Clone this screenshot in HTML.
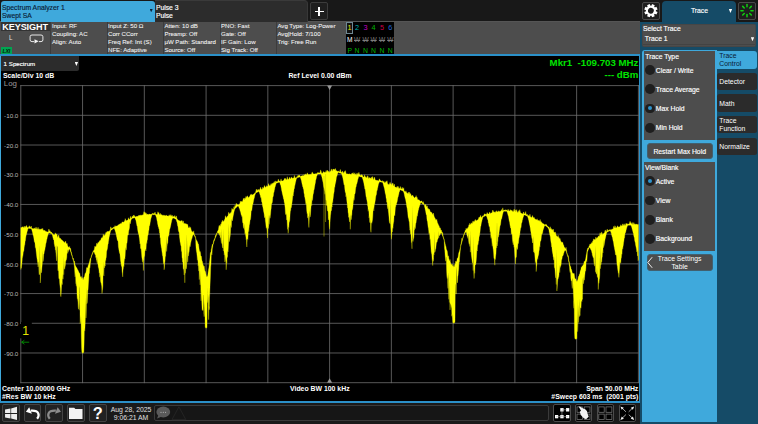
<!DOCTYPE html>
<html><head><meta charset="utf-8"><title>Spectrum Analyzer</title>
<style>
html,body{margin:0;padding:0;background:#181818;}
body{width:758px;height:424px;position:relative;overflow:hidden;font-family:"Liberation Sans",Arial,sans-serif;color:#fff;}
.a{position:absolute;white-space:nowrap;}
.tri{position:absolute;width:3.4px;height:4px;background:#fff;clip-path:polygon(0 0,100% 0,50% 100%);}
.t{position:absolute;white-space:nowrap;line-height:8.05px;font-size:6.8px;-webkit-text-stroke:0.15px currentColor;}
.i{position:absolute;white-space:nowrap;font-size:6.1px;line-height:8.05px;color:#f4f4f4;-webkit-text-stroke:0.07px #f4f4f4;}
.b{position:absolute;white-space:nowrap;font-weight:bold;font-size:6.9px;line-height:8.4px;color:#fff;}
.yl{position:absolute;left:4.1px;font-size:6.25px;line-height:7px;color:#bcbcbc;white-space:nowrap;}
.sep{position:absolute;top:22px;height:32px;width:1px;background:#3c3c3c;}
.btn{position:absolute;background:#222;border:1px solid #444;border-radius:2px;box-sizing:border-box;}
.sb{position:absolute;left:717.3px;width:40px;height:17.2px;background:#2b2b2b;border-radius:2.5px;font-size:6.8px;line-height:7.8px;color:#fff;box-sizing:border-box;padding-left:2px;white-space:nowrap;}
.rad{position:absolute;left:645.4px;width:9.8px;height:9.8px;border-radius:50%;background:#1e1e1e;}
.rad.on::after{content:"";position:absolute;left:2.9px;top:2.9px;width:4px;height:4px;border-radius:50%;background:#2f93cc;}
.rl{position:absolute;left:655.8px;font-size:6.8px;line-height:8px;color:#fff;white-space:nowrap;-webkit-text-stroke:0.15px #fff;}
</style></head><body>

<div class="a" style="left:0;top:20.8px;width:639.8px;height:34px;background:#4d4d4d;"></div><div class="a" style="left:0;top:21.2px;width:639.8px;height:1.2px;background:#555;"></div>
<!-- ===== top tabs ===== -->
<div class="a" style="left:1px;top:1px;width:153.5px;height:21px;background:#3fa9dc;border-radius:3px 3px 0 0;"></div>
<div class="t" style="left:2px;top:4.1px;color:#0a2036;">Spectrum Analyzer 1<br>Swept SA</div>
<div class="tri" style="left:149.7px;top:9px;width:3px;height:3.3px;background:#0a2036;"></div>
<div class="a" style="left:155px;top:0;width:153.4px;height:22px;background:#2c2c2c;border-radius:0 4px 0 0;border-top:0.8px solid #3a3a3a;border-right:0.8px solid #383838;box-sizing:border-box;"></div>
<div class="t" style="left:155.9px;top:4.1px;color:#fff;">Pulse 3<br>Pulse</div>
<div class="btn" style="left:310px;top:2.2px;width:17.9px;height:17.7px;background:#1e1e1e;border-color:#3c3c3c;"></div>
<div class="a" style="left:314.5px;top:10.5px;width:9.6px;height:1.8px;background:#fff;"></div>
<div class="a" style="left:318.4px;top:6.8px;width:1.8px;height:9.2px;background:#fff;"></div>

<!-- ===== header info bar ===== -->

<div class="a" style="left:1px;top:22px;width:48.5px;height:9.1px;background:#333;"></div>
<div class="a" style="left:2.3px;top:22px;font-weight:bold;font-size:9.1px;line-height:10px;letter-spacing:-0.12px;color:#fff;">KEYSIGHT</div>
<div class="a" style="left:8.5px;top:34.1px;font-size:7.2px;line-height:8px;color:#e4e4e4;transform:scaleX(0.85);transform-origin:0 0;">L</div>
<svg class="a" style="left:29px;top:33px;" width="16" height="12" viewBox="0 0 16 12"><path d="M5.2 8.6H3Q1.1 8.6 1.1 6.9V3.7Q1.1 2 3 2H12Q13.9 2 13.9 3.7V6.9Q13.9 8.6 12 8.6H10" fill="none" stroke="#f0f0f0" stroke-width="0.95"/><path d="M5.5 6.3L9.6 8.35L5.5 10.4Z" fill="#f4f4f4"/></svg>
<div class="a" style="left:1.1px;top:47.4px;width:11.2px;height:7px;background:#00a651;"></div>
<div class="a" style="left:2.6px;top:47.8px;font-size:5.3px;line-height:6.8px;font-weight:bold;font-style:italic;letter-spacing:-0.3px;color:#06200e;">LXI</div>
<div class="sep" style="left:50px;"></div><div class="sep" style="left:106.6px;"></div><div class="sep" style="left:163px;"></div><div class="sep" style="left:219.6px;"></div><div class="sep" style="left:276.2px;"></div>
<div class="i" style="left:52px;top:21.9px;">Input: RF<br>Coupling: AC<br>Align: Auto</div>
<div class="i" style="left:108px;top:21.9px;">Input Z: 50 &#937;<br>Corr CCorr<br>Freq Ref: Int (S)<br>NFE: Adaptive</div>
<div class="i" style="left:164.4px;top:21.9px;">Atten: 10 dB<br>Preamp: Off<br>&#181;W Path: Standard<br>Source: Off</div>
<div class="i" style="left:221px;top:21.9px;">PNO: Fast<br>Gate: Off<br>IF Gain: Low<br>Sig Track: Off</div>
<div class="i" style="left:277.4px;top:21.9px;">Avg Type: Log-Power<br>Avg|Hold: 7/100<br>Trig: Free Run</div>
<!-- trace indicator -->
<div class="a" style="left:345.8px;top:22px;width:48.4px;height:32.2px;background:#000;"></div>
<div class="a" style="left:345.8px;top:22.2px;width:7px;height:11.4px;box-sizing:border-box;border:0.8px solid #6f8792;background:#111;"></div>
<div class="a" id="tn" style="left:345.8px;top:24px;font-size:7.3px;line-height:8px;width:49px;">
<span style="color:#e6e600;left:1.8px">1</span><span style="color:#00b4b4;left:9.3px">2</span><span style="color:#c800c8;left:17.7px">3</span><span style="color:#00b400;left:25.8px">4</span><span style="color:#c80046;left:34.2px">5</span><span style="color:#2264d8;left:42.5px">6</span></div>
<div class="a" id="tm" style="left:345.8px;top:35.6px;font-size:6.6px;line-height:8px;width:49px;">
<span style="color:#fff;left:1.2px">M</span><span style="color:#7c7c7c;left:8.2px;text-decoration:line-through">W</span><span style="color:#7c7c7c;left:16.6px;text-decoration:line-through">W</span><span style="color:#7c7c7c;left:24.7px;text-decoration:line-through">W</span><span style="color:#7c7c7c;left:33.1px;text-decoration:line-through">W</span><span style="color:#7c7c7c;left:41.4px;text-decoration:line-through">W</span></div>
<div class="a" id="tp" style="left:345.8px;top:46.8px;font-size:6.8px;line-height:8px;width:49px;color:#00b400;">
<span style="left:1.7px">P</span><span style="left:8.8px">N</span><span style="left:17.2px">N</span><span style="left:25.3px">N</span><span style="left:33.7px">N</span><span style="left:42px">N</span></div>
<style>#tn span,#tm span,#tp span{position:absolute;top:0;}</style>

<!-- ===== plot window ===== -->
<div class="a" style="left:0;top:398px;width:639.8px;height:26px;background:#1a1a1a;"></div>
<div class="a" style="left:0;top:54.3px;width:639.8px;height:348.3px;background:#2b90c8;"></div><div class="a" style="left:0;top:56px;width:1.4px;height:345.2px;background:#3fa9dc;"></div><div class="a" style="left:1.4px;top:56px;width:637.4px;height:345.2px;background:#000;"></div>
<div class="a" style="left:1.3px;top:55.8px;width:77.5px;height:15.4px;background:#2c2c2c;border-radius:0 0 2px 0;"></div>
<div class="a" style="left:3.6px;top:60px;font-size:6.2px;line-height:8px;color:#fff;-webkit-text-stroke:0.15px #fff;">1 Spectrum</div>
<div class="tri" style="left:74.7px;top:61.9px;"></div>
<div class="b" style="left:2.9px;top:72.4px;">Scale/Div 10 dB</div>
<div class="a" style="left:3.8px;top:79.2px;font-size:7.9px;line-height:9px;color:#9a9a9a;">Log</div>
<div class="b" style="left:288.4px;top:72.4px;">Ref Level 0.00 dBm</div>
<div class="a" style="right:119.6px;top:57.4px;font-weight:bold;font-size:9.7px;line-height:11px;color:#00e400;white-space:pre;text-align:right;">Mkr1  -109.703 MHz</div>
<div class="a" style="right:119.6px;top:69.4px;font-weight:bold;font-size:9.7px;line-height:11px;color:#00e400;text-align:right;">--- dBm</div>
<div class="b" style="left:2px;top:385px;">Center 10.00000 GHz<br>#Res BW 10 kHz</div>
<div class="b" style="left:290px;top:384.8px;">Video BW 100 kHz</div>
<div class="b" style="right:119.7px;top:384.9px;text-align:right;">Span 50.00 MHz<br>#Sweep 603 ms&nbsp; (2001 pts)</div>
<div class="yl" style="top:112.0px;">-10.0</div><div class="yl" style="top:141.7px;">-20.0</div><div class="yl" style="top:171.4px;">-30.0</div><div class="yl" style="top:201.1px;">-40.0</div><div class="yl" style="top:230.8px;">-50.0</div><div class="yl" style="top:260.5px;">-60.0</div><div class="yl" style="top:290.2px;">-70.0</div><div class="yl" style="top:319.9px;">-80.0</div><div class="yl" style="top:349.6px;">-90.0</div>

<svg class="a" style="left:0;top:0;" width="640" height="402" viewBox="0 0 640 402">
<g stroke="#6e6e6e" stroke-width="0.8" fill="none">
<path d="M20.80 85.14999999999999V383.15"/>
<path d="M20.35 85.60H638.85"/>
<path d="M82.56 85.14999999999999V383.15"/>
<path d="M20.35 115.31H638.85"/>
<path d="M144.32 85.14999999999999V383.15"/>
<path d="M20.35 145.02H638.85"/>
<path d="M206.08 85.14999999999999V383.15"/>
<path d="M20.35 174.73H638.85"/>
<path d="M267.84 85.14999999999999V383.15"/>
<path d="M20.35 204.44H638.85"/>
<path d="M329.60 85.14999999999999V383.15"/>
<path d="M20.35 234.15H638.85"/>
<path d="M391.36 85.14999999999999V383.15"/>
<path d="M20.35 263.86H638.85"/>
<path d="M453.12 85.14999999999999V383.15"/>
<path d="M20.35 293.57H638.85"/>
<path d="M514.88 85.14999999999999V383.15"/>
<path d="M20.35 323.28H638.85"/>
<path d="M576.64 85.14999999999999V383.15"/>
<path d="M20.35 352.99H638.85"/>
<path d="M638.40 85.14999999999999V383.15"/>
<path d="M20.35 382.70H638.85"/>
</g>
<path d="M327.1 85.6H332.1L329.6 90Z" fill="#969696"/><path d="M327.1 382.7H332.1L329.6 378.3Z" fill="#969696"/>
<path fill="#ffff00" stroke="#ffff00" stroke-width="0.3" stroke-linejoin="round" d="M20.8 227.6 L21.1 227.5 L21.4 227.6 L21.7 227.4 L22.0 227.1 L22.3 226.7 L22.7 227.0 L23.0 227.3 L23.3 227.6 L23.6 227.6 L23.9 226.8 L24.2 226.0 L24.5 227.0 L24.8 227.6 L25.1 227.6 L25.4 226.9 L25.7 226.2 L26.0 226.7 L26.4 225.6 L26.7 225.6 L27.0 226.9 L27.3 227.0 L27.6 227.5 L27.9 228.0 L28.2 227.4 L28.5 227.4 L28.8 226.6 L29.1 226.4 L29.4 225.7 L29.8 226.4 L30.1 227.1 L30.4 227.5 L30.7 227.3 L31.0 226.4 L31.3 226.0 L31.6 227.8 L31.9 228.6 L32.2 228.3 L32.5 228.5 L32.8 228.7 L33.2 228.7 L33.5 228.8 L33.8 228.4 L34.1 227.9 L34.4 228.2 L34.7 228.4 L35.0 228.7 L35.3 229.0 L35.6 228.3 L35.9 227.3 L36.2 227.3 L36.5 228.4 L36.9 229.3 L37.2 229.2 L37.5 229.3 L37.8 227.9 L38.1 227.3 L38.4 228.8 L38.7 229.2 L39.0 229.5 L39.3 229.7 L39.6 229.2 L39.9 228.7 L40.3 229.5 L40.6 229.7 L40.9 229.1 L41.2 229.5 L41.5 229.1 L41.8 228.6 L42.1 229.7 L42.4 229.3 L42.7 228.3 L43.0 229.3 L43.3 230.5 L43.7 230.5 L44.0 230.3 L44.3 230.0 L44.6 230.5 L44.9 231.0 L45.2 230.8 L45.5 231.3 L45.8 231.5 L46.1 231.5 L46.4 231.7 L46.7 231.8 L47.0 231.6 L47.4 232.1 L47.7 232.0 L48.0 231.9 L48.3 231.9 L48.6 230.6 L48.9 229.0 L49.2 230.0 L49.5 231.3 L49.8 230.9 L50.1 230.7 L50.4 231.6 L50.8 232.4 L51.1 232.1 L51.4 232.1 L51.7 232.8 L52.0 232.8 L52.3 233.8 L52.6 233.4 L52.9 234.1 L53.2 234.3 L53.5 234.6 L53.8 234.7 L54.2 234.9 L54.5 234.5 L54.8 234.2 L55.1 234.0 L55.4 232.8 L55.7 233.7 L56.0 233.9 L56.3 233.9 L56.6 235.0 L56.9 234.1 L57.2 235.7 L57.5 237.1 L57.9 237.4 L58.2 236.6 L58.5 235.2 L58.8 234.9 L59.1 236.7 L59.4 238.3 L59.7 237.9 L60.0 238.5 L60.3 238.1 L60.6 238.7 L60.9 239.3 L61.3 239.6 L61.6 240.0 L61.9 239.8 L62.2 240.2 L62.5 240.4 L62.8 241.1 L63.1 241.3 L63.4 241.6 L63.7 241.6 L64.0 241.9 L64.3 242.4 L64.6 242.8 L65.0 242.2 L65.3 241.4 L65.6 241.0 L65.9 242.5 L66.2 244.0 L66.5 244.1 L66.8 243.2 L67.1 243.3 L67.4 244.8 L67.7 246.0 L68.0 246.6 L68.4 246.9 L68.7 247.3 L69.0 247.4 L69.3 247.1 L69.6 246.4 L69.9 247.9 L70.2 248.8 L70.5 248.1 L70.8 249.5 L71.1 251.5 L71.4 252.3 L71.8 254.1 L72.1 254.9 L72.4 256.4 L72.7 257.7 L73.0 258.3 L73.3 258.0 L73.6 259.4 L73.9 261.6 L74.2 261.0 L74.5 261.1 L74.8 263.3 L75.1 264.8 L75.5 265.7 L75.8 266.3 L76.1 266.9 L76.4 267.3 L76.7 267.8 L77.0 268.3 L77.3 268.9 L77.6 269.5 L77.9 270.2 L78.2 270.4 L78.5 271.3 L78.9 272.2 L79.2 273.0 L79.5 272.9 L79.8 273.6 L80.1 275.6 L80.4 276.7 L80.7 277.2 L81.0 276.7 L81.3 276.4 L81.6 278.1 L81.9 278.7 L82.3 277.6 L82.6 278.2 L82.9 279.7 L83.2 279.8 L83.5 278.8 L83.8 277.5 L84.1 277.1 L84.4 277.1 L84.7 275.5 L85.0 273.7 L85.3 273.3 L85.6 273.0 L86.0 272.1 L86.3 270.2 L86.6 267.7 L86.9 267.6 L87.2 268.2 L87.5 267.7 L87.8 266.9 L88.1 265.8 L88.4 264.7 L88.7 264.3 L89.0 263.2 L89.4 262.1 L89.7 260.8 L90.0 259.1 L90.3 258.4 L90.6 258.2 L90.9 258.0 L91.2 256.2 L91.5 255.4 L91.8 254.8 L92.1 253.7 L92.4 253.1 L92.8 252.3 L93.1 250.9 L93.4 250.5 L93.7 250.7 L94.0 250.4 L94.3 249.3 L94.6 247.6 L94.9 246.0 L95.2 246.3 L95.5 246.9 L95.8 247.0 L96.1 246.4 L96.5 244.2 L96.8 243.1 L97.1 244.2 L97.4 244.3 L97.7 243.4 L98.0 242.4 L98.3 242.9 L98.6 242.2 L98.9 242.2 L99.2 241.4 L99.5 241.1 L99.9 240.6 L100.2 240.5 L100.5 240.2 L100.8 239.8 L101.1 238.9 L101.4 237.8 L101.7 237.8 L102.0 238.2 L102.3 237.6 L102.6 237.4 L102.9 236.3 L103.2 234.2 L103.6 234.8 L103.9 236.2 L104.2 235.9 L104.5 235.1 L104.8 234.7 L105.1 234.5 L105.4 234.2 L105.7 233.2 L106.0 232.2 L106.3 232.6 L106.6 233.0 L107.0 231.6 L107.3 231.2 L107.6 232.1 L107.9 231.6 L108.2 231.3 L108.5 231.6 L108.8 231.6 L109.1 231.5 L109.4 230.7 L109.7 230.8 L110.0 230.7 L110.4 229.1 L110.7 226.8 L111.0 227.3 L111.3 228.8 L111.6 228.6 L111.9 228.6 L112.2 228.4 L112.5 228.1 L112.8 227.9 L113.1 227.8 L113.4 227.1 L113.7 227.2 L114.1 227.2 L114.4 227.3 L114.7 226.5 L115.0 225.6 L115.3 225.9 L115.6 226.4 L115.9 226.6 L116.2 226.1 L116.5 226.3 L116.8 225.8 L117.1 225.8 L117.5 225.7 L117.8 225.5 L118.1 225.3 L118.4 224.6 L118.7 224.9 L119.0 224.5 L119.3 224.3 L119.6 224.2 L119.9 224.1 L120.2 223.6 L120.5 223.8 L120.9 223.6 L121.2 223.5 L121.5 223.4 L121.8 222.7 L122.1 222.0 L122.4 221.8 L122.7 222.1 L123.0 222.5 L123.3 222.1 L123.6 222.2 L123.9 221.7 L124.2 221.6 L124.6 221.2 L124.9 219.9 L125.2 218.6 L125.5 219.6 L125.8 220.5 L126.1 220.9 L126.4 220.2 L126.7 220.7 L127.0 220.4 L127.3 220.0 L127.6 220.3 L128.0 219.6 L128.3 218.6 L128.6 217.7 L128.9 218.7 L129.2 219.4 L129.5 219.3 L129.8 219.2 L130.1 218.7 L130.4 216.7 L130.7 216.3 L131.0 218.1 L131.4 218.2 L131.7 217.7 L132.0 217.2 L132.3 216.1 L132.6 216.2 L132.9 217.1 L133.2 216.5 L133.5 215.2 L133.8 214.9 L134.1 216.1 L134.4 215.6 L134.7 215.9 L135.1 217.2 L135.4 216.6 L135.7 217.0 L136.0 216.8 L136.3 216.7 L136.6 216.0 L136.9 216.6 L137.2 216.3 L137.5 216.1 L137.8 216.4 L138.1 216.3 L138.5 215.7 L138.8 215.1 L139.1 215.4 L139.4 215.6 L139.7 215.5 L140.0 214.8 L140.3 215.0 L140.6 215.5 L140.9 215.5 L141.2 215.4 L141.5 215.3 L141.8 214.9 L142.2 214.8 L142.5 215.0 L142.8 215.2 L143.1 215.1 L143.4 214.5 L143.7 213.1 L144.0 211.6 L144.3 212.6 L144.6 213.4 L144.9 212.0 L145.2 213.3 L145.6 213.7 L145.9 212.8 L146.2 213.2 L146.5 214.1 L146.8 214.7 L147.1 214.1 L147.4 214.3 L147.7 214.5 L148.0 214.3 L148.3 214.6 L148.6 214.6 L149.0 214.3 L149.3 213.8 L149.6 214.6 L149.9 214.1 L150.2 214.4 L150.5 214.5 L150.8 214.0 L151.1 214.4 L151.4 214.2 L151.7 214.1 L152.0 213.7 L152.3 213.6 L152.7 213.3 L153.0 213.5 L153.3 213.5 L153.6 213.7 L153.9 213.5 L154.2 213.4 L154.5 213.6 L154.8 212.5 L155.1 212.1 L155.4 213.4 L155.7 214.3 L156.1 214.1 L156.4 214.6 L156.7 214.4 L157.0 214.4 L157.3 214.4 L157.6 213.3 L157.9 211.7 L158.2 212.4 L158.5 213.5 L158.8 212.5 L159.1 213.6 L159.5 214.6 L159.8 215.0 L160.1 214.1 L160.4 213.3 L160.7 214.4 L161.0 215.3 L161.3 215.0 L161.6 214.4 L161.9 214.7 L162.2 215.4 L162.5 214.9 L162.8 215.4 L163.2 215.3 L163.5 215.0 L163.8 215.7 L164.1 215.4 L164.4 215.3 L164.7 215.5 L165.0 215.6 L165.3 215.5 L165.6 215.8 L165.9 215.7 L166.2 215.3 L166.6 215.2 L166.9 215.7 L167.2 216.1 L167.5 215.9 L167.8 215.9 L168.1 215.7 L168.4 215.8 L168.7 216.4 L169.0 215.5 L169.3 214.7 L169.6 215.4 L170.0 216.3 L170.3 216.0 L170.6 214.9 L170.9 214.6 L171.2 215.8 L171.5 216.6 L171.8 215.8 L172.1 215.1 L172.4 216.1 L172.7 216.6 L173.0 216.8 L173.3 216.6 L173.7 216.2 L174.0 217.2 L174.3 216.7 L174.6 215.8 L174.9 215.5 L175.2 216.8 L175.5 217.5 L175.8 217.4 L176.1 216.2 L176.4 216.0 L176.7 217.7 L177.1 219.3 L177.4 219.1 L177.7 219.8 L178.0 220.1 L178.3 220.2 L178.6 220.4 L178.9 220.2 L179.2 220.8 L179.5 220.9 L179.8 220.7 L180.1 220.7 L180.4 221.4 L180.8 221.1 L181.1 220.7 L181.4 220.3 L181.7 221.2 L182.0 220.8 L182.3 220.9 L182.6 222.5 L182.9 222.4 L183.2 220.8 L183.5 221.8 L183.8 223.5 L184.2 223.7 L184.5 223.6 L184.8 223.2 L185.1 223.6 L185.4 223.9 L185.7 223.5 L186.0 224.3 L186.3 224.6 L186.6 223.8 L186.9 224.0 L187.2 225.0 L187.6 224.2 L187.9 225.6 L188.2 227.0 L188.5 227.7 L188.8 228.0 L189.1 228.1 L189.4 227.9 L189.7 226.5 L190.0 228.0 L190.3 228.2 L190.6 227.2 L190.9 228.6 L191.3 230.3 L191.6 231.1 L191.9 231.5 L192.2 231.5 L192.5 231.8 L192.8 232.2 L193.1 233.1 L193.4 232.1 L193.7 230.8 L194.0 232.6 L194.3 234.6 L194.7 235.3 L195.0 236.0 L195.3 236.2 L195.6 237.4 L195.9 238.8 L196.2 239.7 L196.5 240.1 L196.8 240.7 L197.1 241.8 L197.4 241.5 L197.7 242.5 L198.1 244.3 L198.4 243.8 L198.7 245.6 L199.0 248.2 L199.3 249.9 L199.6 251.3 L199.9 251.8 L200.2 251.5 L200.5 252.7 L200.8 255.7 L201.1 256.0 L201.4 256.3 L201.8 259.8 L202.1 260.9 L202.4 261.4 L202.7 263.3 L203.0 264.4 L203.3 265.1 L203.6 266.6 L203.9 266.2 L204.2 265.9 L204.5 268.4 L204.8 270.6 L205.2 271.4 L205.5 271.6 L205.8 273.3 L206.1 275.0 L206.4 276.2 L206.7 277.0 L207.0 277.1 L207.3 276.3 L207.6 275.9 L207.9 274.3 L208.2 271.8 L208.6 269.2 L208.9 267.8 L209.2 265.3 L209.5 262.1 L209.8 259.7 L210.1 256.3 L210.4 252.7 L210.7 252.6 L211.0 251.9 L211.3 249.2 L211.6 248.3 L211.9 245.9 L212.3 244.3 L212.6 244.7 L212.9 244.1 L213.2 243.0 L213.5 241.6 L213.8 240.1 L214.1 239.7 L214.4 239.0 L214.7 238.8 L215.0 237.4 L215.3 236.0 L215.7 235.1 L216.0 234.8 L216.3 234.1 L216.6 233.5 L216.9 232.9 L217.2 232.1 L217.5 231.3 L217.8 231.1 L218.1 230.2 L218.4 229.7 L218.7 227.7 L219.0 225.7 L219.4 225.3 L219.7 226.1 L220.0 226.7 L220.3 225.7 L220.6 224.4 L220.9 223.9 L221.2 224.2 L221.5 222.6 L221.8 221.8 L222.1 221.7 L222.4 220.2 L222.8 221.2 L223.1 221.8 L223.4 221.5 L223.7 220.9 L224.0 220.7 L224.3 220.2 L224.6 219.6 L224.9 218.9 L225.2 217.3 L225.5 215.7 L225.8 216.5 L226.2 217.4 L226.5 217.7 L226.8 217.2 L227.1 216.4 L227.4 216.6 L227.7 215.9 L228.0 215.9 L228.3 214.3 L228.6 212.6 L228.9 212.3 L229.2 213.4 L229.5 213.9 L229.9 213.6 L230.2 213.4 L230.5 213.1 L230.8 212.6 L231.1 212.4 L231.4 212.0 L231.7 210.3 L232.0 208.2 L232.3 209.9 L232.6 209.4 L232.9 209.0 L233.3 209.8 L233.6 209.1 L233.9 206.7 L234.2 207.5 L234.5 208.5 L234.8 206.0 L235.1 205.2 L235.4 206.4 L235.7 206.0 L236.0 204.3 L236.3 203.2 L236.7 204.3 L237.0 205.3 L237.3 204.3 L237.6 204.7 L237.9 204.9 L238.2 204.8 L238.5 205.2 L238.8 204.4 L239.1 204.2 L239.4 204.3 L239.7 204.0 L240.0 202.4 L240.4 201.0 L240.7 202.6 L241.0 202.2 L241.3 201.1 L241.6 201.4 L241.9 201.9 L242.2 202.1 L242.5 201.2 L242.8 200.6 L243.1 199.8 L243.4 198.3 L243.8 198.6 L244.1 199.6 L244.4 199.9 L244.7 198.0 L245.0 198.1 L245.3 199.3 L245.6 197.9 L245.9 196.4 L246.2 196.6 L246.5 197.7 L246.8 197.3 L247.2 196.0 L247.5 195.8 L247.8 196.8 L248.1 197.7 L248.4 197.6 L248.7 197.3 L249.0 197.2 L249.3 196.8 L249.6 196.6 L249.9 196.0 L250.2 195.0 L250.5 194.4 L250.9 195.2 L251.2 195.3 L251.5 194.2 L251.8 194.3 L252.1 194.7 L252.4 195.0 L252.7 194.8 L253.0 194.5 L253.3 194.4 L253.6 194.1 L253.9 194.0 L254.3 193.5 L254.6 193.5 L254.9 192.7 L255.2 193.3 L255.5 192.4 L255.8 191.3 L256.1 190.0 L256.4 189.1 L256.7 190.0 L257.0 191.0 L257.3 190.6 L257.6 189.8 L258.0 189.7 L258.3 190.2 L258.6 190.1 L258.9 189.0 L259.2 189.4 L259.5 190.2 L259.8 190.4 L260.1 189.1 L260.4 187.6 L260.7 187.2 L261.0 188.4 L261.4 189.3 L261.7 189.4 L262.0 189.4 L262.3 189.1 L262.6 188.0 L262.9 187.1 L263.2 188.1 L263.5 188.6 L263.8 188.1 L264.1 186.8 L264.4 185.5 L264.8 185.9 L265.1 187.0 L265.4 187.8 L265.7 187.1 L266.0 187.3 L266.3 186.4 L266.6 185.6 L266.9 186.4 L267.2 186.7 L267.5 186.1 L267.8 186.4 L268.1 185.5 L268.5 183.7 L268.8 183.7 L269.1 185.3 L269.4 185.9 L269.7 185.4 L270.0 185.5 L270.3 185.4 L270.6 184.9 L270.9 183.8 L271.2 183.5 L271.5 184.3 L271.9 184.8 L272.2 184.0 L272.5 183.1 L272.8 183.6 L273.1 183.5 L273.4 182.6 L273.7 183.1 L274.0 183.2 L274.3 181.4 L274.6 181.7 L274.9 183.3 L275.3 182.5 L275.6 180.8 L275.9 181.8 L276.2 182.1 L276.5 181.3 L276.8 181.7 L277.1 181.8 L277.4 181.5 L277.7 181.5 L278.0 180.3 L278.3 179.1 L278.6 179.9 L279.0 181.0 L279.3 180.9 L279.6 181.3 L279.9 181.1 L280.2 181.2 L280.5 181.5 L280.8 179.7 L281.1 178.9 L281.4 180.5 L281.7 181.1 L282.0 180.9 L282.4 180.9 L282.7 181.0 L283.0 180.6 L283.3 180.6 L283.6 180.6 L283.9 180.1 L284.2 179.0 L284.5 178.3 L284.8 179.2 L285.1 178.8 L285.4 178.3 L285.8 179.2 L286.1 180.0 L286.4 180.0 L286.7 179.1 L287.0 178.5 L287.3 176.7 L287.6 178.3 L287.9 179.6 L288.2 179.2 L288.5 179.4 L288.8 178.9 L289.1 178.5 L289.5 177.4 L289.8 177.2 L290.1 178.2 L290.4 179.0 L290.7 178.8 L291.0 178.3 L291.3 177.4 L291.6 176.9 L291.9 177.6 L292.2 178.3 L292.5 178.5 L292.9 177.9 L293.2 178.1 L293.5 178.3 L293.8 177.8 L294.1 176.2 L294.4 175.4 L294.7 176.9 L295.0 177.9 L295.3 177.9 L295.6 177.8 L295.9 177.4 L296.2 177.7 L296.6 177.4 L296.9 176.6 L297.2 176.7 L297.5 176.4 L297.8 175.7 L298.1 175.1 L298.4 175.6 L298.7 176.0 L299.0 175.5 L299.3 174.9 L299.6 175.3 L300.0 175.8 L300.3 176.4 L300.6 176.7 L300.9 176.1 L301.2 176.1 L301.5 176.1 L301.8 175.9 L302.1 175.4 L302.4 175.4 L302.7 175.7 L303.0 176.0 L303.4 175.8 L303.7 175.5 L304.0 174.4 L304.3 174.8 L304.6 175.0 L304.9 175.3 L305.2 175.0 L305.5 174.1 L305.8 173.8 L306.1 174.6 L306.4 175.1 L306.7 174.8 L307.1 173.4 L307.4 172.8 L307.7 174.0 L308.0 174.5 L308.3 174.7 L308.6 174.5 L308.9 174.4 L309.2 174.7 L309.5 174.3 L309.8 174.6 L310.1 174.3 L310.5 174.2 L310.8 174.4 L311.1 174.4 L311.4 174.3 L311.7 173.5 L312.0 172.3 L312.3 172.1 L312.6 173.2 L312.9 173.3 L313.2 173.5 L313.5 173.9 L313.9 174.1 L314.2 174.1 L314.5 173.8 L314.8 174.1 L315.1 173.9 L315.4 173.7 L315.7 173.9 L316.0 173.3 L316.3 173.8 L316.6 173.7 L316.9 173.9 L317.2 173.3 L317.6 172.6 L317.9 172.4 L318.2 172.7 L318.5 172.8 L318.8 172.7 L319.1 172.7 L319.4 172.9 L319.7 172.8 L320.0 172.7 L320.3 171.6 L320.6 170.1 L321.0 170.4 L321.3 172.1 L321.6 173.2 L321.9 173.2 L322.2 173.4 L322.5 173.1 L322.8 173.2 L323.1 172.1 L323.4 171.4 L323.7 172.4 L324.0 172.1 L324.4 172.0 L324.7 172.7 L325.0 172.8 L325.3 172.2 L325.6 172.3 L325.9 171.2 L326.2 170.4 L326.5 171.5 L326.8 172.5 L327.1 171.4 L327.4 170.1 L327.7 171.1 L328.1 171.2 L328.4 170.9 L328.7 171.7 L329.0 172.4 L329.3 172.2 L329.6 172.3 L329.9 171.3 L330.2 171.2 L330.5 171.4 L330.8 171.0 L331.1 169.4 L331.5 169.0 L331.8 170.3 L332.1 171.3 L332.4 171.1 L332.7 170.0 L333.0 168.9 L333.3 169.1 L333.6 170.0 L333.9 169.1 L334.2 169.1 L334.5 170.0 L334.8 170.1 L335.2 168.6 L335.5 168.7 L335.8 170.4 L336.1 170.5 L336.4 170.6 L336.7 170.9 L337.0 170.7 L337.3 171.3 L337.6 171.2 L337.9 171.6 L338.2 171.2 L338.6 171.0 L338.9 171.5 L339.2 171.7 L339.5 171.9 L339.8 171.2 L340.1 169.8 L340.4 169.6 L340.7 171.2 L341.0 171.9 L341.3 172.1 L341.6 172.8 L342.0 172.1 L342.3 171.1 L342.6 171.3 L342.9 172.4 L343.2 172.2 L343.5 172.8 L343.8 173.4 L344.1 172.4 L344.4 171.5 L344.7 171.6 L345.0 171.6 L345.3 170.5 L345.7 171.8 L346.0 173.2 L346.3 173.7 L346.6 173.9 L346.9 173.7 L347.2 173.8 L347.5 173.9 L347.8 173.9 L348.1 173.9 L348.4 174.2 L348.7 173.9 L349.1 173.8 L349.4 174.2 L349.7 173.7 L350.0 174.3 L350.3 174.4 L350.6 174.5 L350.9 174.1 L351.2 174.4 L351.5 174.2 L351.8 173.4 L352.1 173.0 L352.5 174.0 L352.8 173.2 L353.1 172.5 L353.4 173.8 L353.7 174.3 L354.0 173.8 L354.3 174.9 L354.6 173.4 L354.9 172.7 L355.2 174.5 L355.5 173.9 L355.8 174.7 L356.2 175.3 L356.5 174.6 L356.8 173.4 L357.1 172.9 L357.4 174.2 L357.7 175.0 L358.0 173.5 L358.3 173.5 L358.6 174.7 L358.9 172.2 L359.2 173.5 L359.6 174.9 L359.9 174.8 L360.2 175.2 L360.5 175.7 L360.8 175.0 L361.1 175.2 L361.4 174.6 L361.7 174.7 L362.0 175.5 L362.3 175.1 L362.6 175.6 L363.0 176.8 L363.3 177.1 L363.6 177.1 L363.9 176.9 L364.2 175.9 L364.5 174.8 L364.8 176.1 L365.1 177.3 L365.4 177.2 L365.7 176.7 L366.0 176.6 L366.3 177.2 L366.7 177.9 L367.0 177.7 L367.3 176.7 L367.6 175.7 L367.9 176.0 L368.2 177.1 L368.5 178.2 L368.8 178.4 L369.1 178.3 L369.4 177.7 L369.7 177.4 L370.1 178.1 L370.4 178.6 L370.7 178.2 L371.0 177.9 L371.3 176.9 L371.6 177.8 L371.9 178.9 L372.2 177.9 L372.5 176.6 L372.8 176.8 L373.1 178.3 L373.4 179.6 L373.8 179.4 L374.1 178.2 L374.4 177.1 L374.7 177.7 L375.0 179.1 L375.3 180.1 L375.6 180.1 L375.9 180.2 L376.2 180.1 L376.5 180.5 L376.8 180.3 L377.2 180.7 L377.5 180.8 L377.8 180.1 L378.1 180.7 L378.4 181.0 L378.7 180.7 L379.0 179.9 L379.3 178.8 L379.6 179.0 L379.9 180.0 L380.2 180.3 L380.6 180.6 L380.9 180.9 L381.2 181.2 L381.5 180.9 L381.8 181.2 L382.1 181.2 L382.4 180.7 L382.7 180.7 L383.0 182.1 L383.3 182.1 L383.6 181.6 L383.9 181.1 L384.3 182.2 L384.6 183.0 L384.9 183.0 L385.2 182.2 L385.5 182.6 L385.8 182.3 L386.1 181.0 L386.4 182.3 L386.7 182.0 L387.0 180.6 L387.3 182.2 L387.7 183.8 L388.0 184.4 L388.3 184.3 L388.6 184.4 L388.9 184.6 L389.2 184.6 L389.5 184.1 L389.8 183.1 L390.1 182.3 L390.4 183.6 L390.7 183.8 L391.1 184.0 L391.4 184.9 L391.7 185.2 L392.0 183.3 L392.3 183.6 L392.6 184.5 L392.9 182.9 L393.2 184.7 L393.5 186.3 L393.8 185.8 L394.1 184.1 L394.4 184.6 L394.8 186.6 L395.1 187.1 L395.4 187.3 L395.7 187.3 L396.0 187.0 L396.3 187.7 L396.6 187.4 L396.9 187.0 L397.2 186.1 L397.5 187.4 L397.8 187.3 L398.2 186.4 L398.5 187.2 L398.8 188.5 L399.1 188.6 L399.4 188.2 L399.7 188.5 L400.0 187.4 L400.3 186.4 L400.6 187.6 L400.9 188.7 L401.2 188.9 L401.6 189.0 L401.9 188.1 L402.2 187.2 L402.5 188.4 L402.8 188.7 L403.1 189.0 L403.4 188.6 L403.7 187.7 L404.0 189.7 L404.3 191.5 L404.6 191.1 L404.9 191.6 L405.3 192.3 L405.6 191.5 L405.9 190.7 L406.2 191.6 L406.5 192.2 L406.8 193.0 L407.1 193.3 L407.4 193.3 L407.7 193.7 L408.0 193.0 L408.3 192.0 L408.7 193.6 L409.0 193.8 L409.3 192.3 L409.6 192.3 L409.9 194.7 L410.2 194.3 L410.5 193.5 L410.8 194.0 L411.1 195.1 L411.4 195.7 L411.7 196.2 L412.0 196.0 L412.4 195.3 L412.7 195.0 L413.0 196.1 L413.3 196.2 L413.6 197.1 L413.9 197.1 L414.2 197.7 L414.5 197.9 L414.8 197.9 L415.1 197.1 L415.4 197.1 L415.8 197.2 L416.1 195.6 L416.4 197.4 L416.7 197.6 L417.0 197.1 L417.3 198.3 L417.6 199.5 L417.9 199.8 L418.2 199.9 L418.5 199.9 L418.8 199.5 L419.2 200.3 L419.5 200.6 L419.8 200.5 L420.1 201.1 L420.4 201.5 L420.7 201.6 L421.0 201.0 L421.3 201.1 L421.6 200.8 L421.9 201.3 L422.2 202.1 L422.5 202.7 L422.9 202.2 L423.2 201.6 L423.5 202.8 L423.8 203.2 L424.1 204.0 L424.4 204.7 L424.7 205.4 L425.0 205.5 L425.3 204.9 L425.6 204.2 L425.9 204.8 L426.3 206.1 L426.6 207.2 L426.9 206.5 L427.2 205.7 L427.5 207.5 L427.8 208.5 L428.1 208.8 L428.4 208.5 L428.7 209.2 L429.0 209.6 L429.3 209.0 L429.7 209.9 L430.0 210.7 L430.3 211.7 L430.6 212.0 L430.9 211.9 L431.2 212.5 L431.5 212.3 L431.8 212.6 L432.1 213.3 L432.4 214.2 L432.7 214.4 L433.0 213.7 L433.4 213.0 L433.7 214.5 L434.0 216.1 L434.3 216.8 L434.6 217.5 L434.9 218.1 L435.2 218.5 L435.5 218.9 L435.8 220.0 L436.1 220.4 L436.4 219.8 L436.8 219.2 L437.1 220.9 L437.4 222.6 L437.7 223.4 L438.0 223.5 L438.3 224.6 L438.6 225.4 L438.9 225.4 L439.2 226.2 L439.5 227.5 L439.8 227.9 L440.2 227.8 L440.5 228.4 L440.8 229.9 L441.1 230.7 L441.4 230.0 L441.7 231.2 L442.0 232.9 L442.3 232.5 L442.6 232.3 L442.9 234.5 L443.2 236.5 L443.5 237.4 L443.9 238.4 L444.2 239.4 L444.5 241.2 L444.8 241.9 L445.1 243.5 L445.4 244.7 L445.7 245.9 L446.0 246.7 L446.3 248.9 L446.6 249.7 L446.9 250.3 L447.3 251.3 L447.6 253.9 L447.9 256.4 L448.2 256.2 L448.5 255.8 L448.8 258.1 L449.1 260.4 L449.4 261.0 L449.7 260.6 L450.0 259.3 L450.3 261.7 L450.6 262.6 L451.0 263.9 L451.3 264.1 L451.6 265.0 L451.9 264.7 L452.2 264.1 L452.5 266.3 L452.8 266.1 L453.1 265.4 L453.4 266.0 L453.7 267.0 L454.0 267.3 L454.4 266.2 L454.7 264.7 L455.0 264.1 L455.3 264.0 L455.6 261.7 L455.9 261.1 L456.2 261.9 L456.5 261.6 L456.8 260.9 L457.1 259.1 L457.4 258.0 L457.8 257.9 L458.1 256.9 L458.4 255.0 L458.7 253.1 L459.0 252.3 L459.3 251.5 L459.6 250.6 L459.9 249.2 L460.2 247.9 L460.5 246.7 L460.8 244.4 L461.1 243.0 L461.5 241.2 L461.8 238.2 L462.1 239.2 L462.4 239.2 L462.7 238.0 L463.0 237.2 L463.3 236.2 L463.6 235.2 L463.9 234.3 L464.2 233.6 L464.5 232.4 L464.9 231.8 L465.2 230.2 L465.5 230.2 L465.8 230.2 L466.1 228.0 L466.4 229.2 L466.7 229.3 L467.0 229.1 L467.3 228.6 L467.6 228.2 L467.9 227.4 L468.3 227.3 L468.6 226.5 L468.9 224.8 L469.2 224.9 L469.5 224.7 L469.8 223.2 L470.1 223.9 L470.4 224.4 L470.7 224.5 L471.0 223.6 L471.3 222.7 L471.6 223.3 L472.0 223.9 L472.3 223.2 L472.6 222.3 L472.9 221.1 L473.2 221.1 L473.5 221.8 L473.8 222.5 L474.1 221.5 L474.4 221.8 L474.7 221.0 L475.0 219.7 L475.4 219.6 L475.7 220.5 L476.0 220.7 L476.3 220.7 L476.6 220.7 L476.9 220.1 L477.2 220.2 L477.5 219.9 L477.8 219.8 L478.1 219.5 L478.4 218.9 L478.8 217.8 L479.1 217.1 L479.4 217.9 L479.7 217.1 L480.0 217.3 L480.3 216.2 L480.6 215.3 L480.9 216.3 L481.2 217.3 L481.5 217.5 L481.8 217.3 L482.1 216.7 L482.5 216.0 L482.8 215.8 L483.1 215.8 L483.4 215.8 L483.7 215.7 L484.0 214.9 L484.3 214.1 L484.6 213.7 L484.9 214.3 L485.2 214.3 L485.5 213.9 L485.9 214.4 L486.2 214.4 L486.5 214.2 L486.8 213.7 L487.1 212.5 L487.4 212.9 L487.7 213.8 L488.0 213.7 L488.3 214.0 L488.6 214.1 L488.9 214.1 L489.2 213.2 L489.6 212.2 L489.9 212.2 L490.2 213.0 L490.5 213.7 L490.8 213.5 L491.1 213.1 L491.4 212.8 L491.7 213.0 L492.0 213.1 L492.3 212.0 L492.6 210.5 L493.0 210.1 L493.3 211.4 L493.6 211.6 L493.9 212.2 L494.2 211.8 L494.5 212.1 L494.8 212.4 L495.1 212.5 L495.4 212.2 L495.7 211.5 L496.0 211.6 L496.4 211.8 L496.7 210.7 L497.0 210.9 L497.3 211.9 L497.6 212.1 L497.9 211.9 L498.2 210.9 L498.5 210.8 L498.8 211.7 L499.1 211.5 L499.4 211.6 L499.7 211.8 L500.1 210.8 L500.4 211.7 L500.7 211.3 L501.0 211.0 L501.3 210.0 L501.6 209.5 L501.9 210.4 L502.2 210.9 L502.5 209.6 L502.8 207.8 L503.1 209.4 L503.5 210.4 L503.8 210.4 L504.1 209.9 L504.4 210.0 L504.7 210.3 L505.0 210.3 L505.3 210.3 L505.6 210.1 L505.9 209.6 L506.2 210.3 L506.5 209.9 L506.9 210.3 L507.2 210.9 L507.5 210.8 L507.8 209.9 L508.1 209.2 L508.4 210.1 L508.7 210.7 L509.0 210.8 L509.3 211.0 L509.6 211.2 L509.9 210.5 L510.2 209.6 L510.6 210.1 L510.9 210.7 L511.2 210.3 L511.5 210.9 L511.8 210.3 L512.1 210.4 L512.4 211.1 L512.7 211.4 L513.0 211.8 L513.3 211.8 L513.6 211.1 L514.0 209.2 L514.3 209.2 L514.6 211.2 L514.9 210.8 L515.2 209.8 L515.5 210.9 L515.8 212.1 L516.1 211.5 L516.4 210.3 L516.7 209.6 L517.0 211.0 L517.4 212.1 L517.7 212.4 L518.0 212.5 L518.3 212.1 L518.6 211.0 L518.9 210.5 L519.2 211.7 L519.5 210.8 L519.8 209.6 L520.1 210.9 L520.4 212.3 L520.7 212.9 L521.1 213.1 L521.4 213.2 L521.7 213.5 L522.0 213.4 L522.3 213.8 L522.6 213.8 L522.9 213.8 L523.2 213.8 L523.5 212.0 L523.8 212.0 L524.1 213.5 L524.5 213.9 L524.8 213.7 L525.1 214.0 L525.4 212.6 L525.7 211.5 L526.0 213.3 L526.3 214.3 L526.6 214.7 L526.9 214.7 L527.2 214.3 L527.5 214.6 L527.8 216.0 L528.2 215.6 L528.5 215.9 L528.8 215.4 L529.1 216.1 L529.4 216.5 L529.7 214.9 L530.0 214.2 L530.3 216.0 L530.6 217.3 L530.9 217.0 L531.2 217.6 L531.6 217.6 L531.9 217.1 L532.2 215.8 L532.5 215.6 L532.8 217.1 L533.1 217.4 L533.4 217.2 L533.7 218.0 L534.0 217.7 L534.3 217.6 L534.6 218.5 L535.0 219.2 L535.3 219.1 L535.6 219.3 L535.9 219.7 L536.2 219.9 L536.5 219.8 L536.8 219.2 L537.1 218.8 L537.4 219.8 L537.7 220.3 L538.0 220.6 L538.3 220.6 L538.7 220.5 L539.0 220.5 L539.3 221.3 L539.6 221.3 L539.9 219.9 L540.2 219.5 L540.5 221.7 L540.8 221.4 L541.1 221.4 L541.4 222.2 L541.7 222.3 L542.1 223.1 L542.4 223.0 L542.7 223.4 L543.0 223.7 L543.3 223.7 L543.6 223.8 L543.9 224.1 L544.2 224.7 L544.5 224.7 L544.8 224.4 L545.1 224.2 L545.5 224.5 L545.8 224.7 L546.1 224.6 L546.4 224.4 L546.7 224.9 L547.0 225.6 L547.3 225.9 L547.6 226.3 L547.9 226.3 L548.2 226.9 L548.5 227.1 L548.8 226.8 L549.2 227.4 L549.5 228.3 L549.8 229.0 L550.1 227.8 L550.4 226.7 L550.7 228.9 L551.0 229.1 L551.3 228.5 L551.6 228.9 L551.9 230.1 L552.2 230.3 L552.6 229.4 L552.9 230.3 L553.2 229.1 L553.5 230.1 L553.8 232.0 L554.1 232.5 L554.4 232.0 L554.7 232.5 L555.0 232.9 L555.3 231.9 L555.6 232.9 L556.0 234.6 L556.3 235.6 L556.6 236.1 L556.9 236.3 L557.2 236.6 L557.5 237.1 L557.8 236.4 L558.1 235.3 L558.4 236.7 L558.7 237.7 L559.0 237.3 L559.3 239.0 L559.7 238.6 L560.0 238.3 L560.3 239.6 L560.6 240.8 L560.9 241.2 L561.2 241.8 L561.5 242.1 L561.8 242.6 L562.1 242.3 L562.4 241.9 L562.7 242.4 L563.1 243.8 L563.4 245.1 L563.7 245.1 L564.0 246.5 L564.3 246.9 L564.6 247.4 L564.9 247.7 L565.2 248.9 L565.5 248.7 L565.8 247.9 L566.1 247.3 L566.4 249.7 L566.8 252.1 L567.1 253.2 L567.4 254.6 L567.7 255.2 L568.0 255.5 L568.3 255.7 L568.6 257.9 L568.9 260.2 L569.2 261.7 L569.5 263.2 L569.8 264.3 L570.2 266.0 L570.5 266.3 L570.8 267.1 L571.1 269.1 L571.4 269.3 L571.7 270.1 L572.0 271.6 L572.3 272.7 L572.6 272.9 L572.9 273.4 L573.2 273.4 L573.6 274.1 L573.9 273.2 L574.2 273.8 L574.5 276.0 L574.8 278.0 L575.1 278.8 L575.4 278.9 L575.7 278.8 L576.0 279.4 L576.3 280.8 L576.6 281.1 L576.9 281.7 L577.3 281.1 L577.6 279.8 L577.9 279.8 L578.2 277.6 L578.5 276.2 L578.8 276.8 L579.1 275.2 L579.4 274.0 L579.7 274.4 L580.0 272.2 L580.3 270.6 L580.7 270.5 L581.0 268.4 L581.3 266.8 L581.6 267.5 L581.9 266.9 L582.2 265.7 L582.5 266.0 L582.8 265.8 L583.1 265.0 L583.4 264.4 L583.7 263.7 L584.1 261.9 L584.4 261.0 L584.7 261.7 L585.0 261.3 L585.3 260.1 L585.6 259.2 L585.9 257.2 L586.2 255.0 L586.5 254.0 L586.8 252.1 L587.1 250.0 L587.4 249.3 L587.8 248.0 L588.1 248.0 L588.4 248.3 L588.7 247.4 L589.0 246.3 L589.3 245.7 L589.6 245.2 L589.9 244.0 L590.2 244.0 L590.5 244.7 L590.8 243.7 L591.2 243.4 L591.5 243.2 L591.8 242.4 L592.1 242.9 L592.4 242.6 L592.7 241.1 L593.0 241.2 L593.3 240.3 L593.6 238.8 L593.9 239.7 L594.2 240.2 L594.6 239.1 L594.9 239.9 L595.2 239.7 L595.5 238.7 L595.8 237.1 L596.1 237.5 L596.4 238.5 L596.7 238.6 L597.0 238.3 L597.3 237.4 L597.6 237.8 L597.9 237.2 L598.3 236.3 L598.6 235.8 L598.9 236.2 L599.2 236.5 L599.5 235.7 L599.8 234.2 L600.1 232.7 L600.4 233.7 L600.7 234.7 L601.0 235.0 L601.3 233.2 L601.7 231.9 L602.0 233.4 L602.3 234.7 L602.6 234.4 L602.9 233.5 L603.2 233.9 L603.5 233.7 L603.8 233.6 L604.1 233.1 L604.4 232.9 L604.7 232.1 L605.0 230.4 L605.4 229.9 L605.7 231.3 L606.0 232.1 L606.3 231.5 L606.6 231.2 L606.9 230.3 L607.2 229.1 L607.5 229.9 L607.8 230.7 L608.1 230.6 L608.4 230.4 L608.8 230.2 L609.1 229.9 L609.4 229.8 L609.7 229.9 L610.0 229.5 L610.3 229.9 L610.6 230.0 L610.9 229.4 L611.2 229.5 L611.5 229.7 L611.8 229.7 L612.2 228.8 L612.5 229.3 L612.8 229.3 L613.1 229.1 L613.4 228.1 L613.7 226.3 L614.0 227.1 L614.3 227.9 L614.6 227.8 L614.9 225.7 L615.2 226.1 L615.5 227.5 L615.9 227.9 L616.2 227.9 L616.5 227.5 L616.8 227.3 L617.1 227.0 L617.4 225.9 L617.7 225.8 L618.0 226.8 L618.3 227.2 L618.6 227.0 L618.9 226.8 L619.3 226.9 L619.6 226.7 L619.9 226.7 L620.2 226.2 L620.5 225.8 L620.8 224.7 L621.1 225.1 L621.4 226.0 L621.7 226.0 L622.0 226.2 L622.3 225.6 L622.7 224.1 L623.0 223.8 L623.3 225.3 L623.6 225.8 L623.9 224.8 L624.2 223.7 L624.5 224.9 L624.8 225.6 L625.1 225.5 L625.4 225.2 L625.7 224.3 L626.0 223.3 L626.4 223.8 L626.7 223.9 L627.0 223.4 L627.3 224.2 L627.6 224.1 L627.9 224.2 L628.2 224.2 L628.5 223.8 L628.8 224.3 L629.1 223.8 L629.4 223.5 L629.8 222.1 L630.1 221.2 L630.4 222.5 L630.7 222.4 L631.0 223.0 L631.3 224.2 L631.6 223.8 L631.9 222.8 L632.2 222.4 L632.5 223.4 L632.8 224.4 L633.2 224.4 L633.5 223.4 L633.8 222.5 L634.1 223.2 L634.4 224.1 L634.7 224.6 L635.0 224.0 L635.3 224.0 L635.6 224.5 L635.9 224.7 L636.2 223.8 L636.5 224.7 L636.9 224.0 L637.2 224.5 L637.5 224.7 L637.8 224.3 L638.1 224.4 L638.4 224.6 L638.4 259.2 L638.1 260.7 L637.8 253.6 L637.5 256.0 L637.2 250.6 L636.9 252.0 L636.5 249.5 L636.2 247.7 L635.9 246.5 L635.6 245.1 L635.3 242.7 L635.0 241.8 L634.7 240.7 L634.4 237.9 L634.1 236.9 L633.8 235.9 L633.5 233.8 L633.2 233.0 L632.8 231.5 L632.5 230.2 L632.2 229.3 L631.9 227.9 L631.6 227.0 L631.3 226.2 L631.0 225.5 L630.7 225.2 L630.4 225.2 L630.1 225.2 L629.8 225.3 L629.4 225.2 L629.1 225.3 L628.8 225.3 L628.5 225.3 L628.2 225.2 L627.9 225.4 L627.6 225.4 L627.3 226.3 L627.0 227.0 L626.7 228.1 L626.4 229.3 L626.0 230.6 L625.7 232.4 L625.4 232.7 L625.1 233.2 L624.8 234.9 L624.5 238.1 L624.2 238.3 L623.9 241.1 L623.6 242.8 L623.3 245.2 L623.0 246.8 L622.7 249.2 L622.3 246.6 L622.0 254.2 L621.7 253.4 L621.4 257.5 L621.1 258.6 L620.8 262.6 L620.5 261.5 L620.2 263.3 L619.9 261.7 L619.6 267.7 L619.3 271.4 L618.9 277.4 L618.6 272.0 L618.3 273.3 L618.0 271.3 L617.7 269.2 L617.4 266.6 L617.1 265.0 L616.8 262.2 L616.5 256.7 L616.2 255.1 L615.9 254.3 L615.5 255.0 L615.2 252.1 L614.9 250.6 L614.6 249.1 L614.3 247.3 L614.0 246.0 L613.7 243.8 L613.4 241.7 L613.1 241.1 L612.8 239.4 L612.5 237.5 L612.2 237.0 L611.8 235.6 L611.5 234.4 L611.2 232.8 L610.9 232.4 L610.6 231.5 L610.3 231.0 L610.0 230.6 L609.7 230.8 L609.4 231.1 L609.1 231.2 L608.8 231.3 L608.4 231.4 L608.1 231.6 L607.8 231.8 L607.5 231.9 L607.2 232.1 L606.9 232.2 L606.6 233.2 L606.3 234.3 L606.0 235.6 L605.7 237.0 L605.4 238.2 L605.0 239.7 L604.7 241.6 L604.4 243.5 L604.1 245.5 L603.8 246.4 L603.5 247.7 L603.2 240.0 L602.9 253.0 L602.6 249.5 L602.3 256.8 L602.0 257.8 L601.7 261.7 L601.3 262.2 L601.0 265.0 L600.7 265.1 L600.4 268.8 L600.1 245.9 L599.8 274.3 L599.5 278.5 L599.2 279.8 L598.9 283.3 L598.6 279.5 L598.3 289.5 L597.9 275.3 L597.6 277.4 L597.3 277.2 L597.0 267.6 L596.7 274.3 L596.4 273.2 L596.1 273.4 L595.8 271.5 L595.5 271.7 L595.2 245.7 L594.9 258.4 L594.6 266.2 L594.2 264.1 L593.9 262.5 L593.6 256.9 L593.3 257.8 L593.0 257.2 L592.7 255.7 L592.4 255.6 L592.1 253.1 L591.8 252.4 L591.5 250.6 L591.2 250.4 L590.8 249.6 L590.5 249.0 L590.2 248.2 L589.9 247.8 L589.6 247.5 L589.3 247.6 L589.0 248.3 L588.7 248.9 L588.4 249.6 L588.1 250.2 L587.8 251.1 L587.4 252.1 L587.1 258.3 L586.8 261.8 L586.5 260.9 L586.2 259.7 L585.9 267.9 L585.6 271.2 L585.3 269.8 L585.0 273.6 L584.7 275.9 L584.4 280.2 L584.1 275.6 L583.7 281.9 L583.4 283.8 L583.1 276.7 L582.8 280.0 L582.5 299.4 L582.2 298.3 L581.9 301.6 L581.6 300.6 L581.3 301.7 L581.0 308.2 L580.7 307.3 L580.3 308.2 L580.0 315.7 L579.7 313.6 L579.4 316.7 L579.1 298.2 L578.8 315.9 L578.5 322.5 L578.2 304.4 L577.9 326.0 L577.6 331.7 L577.3 299.2 L576.9 338.6 L576.6 338.8 L576.3 339.0 L576.0 339.2 L575.7 339.2 L575.4 338.9 L575.1 338.7 L574.8 338.4 L574.5 332.5 L574.2 300.8 L573.9 308.3 L573.6 298.2 L573.2 289.8 L572.9 279.2 L572.6 278.0 L572.3 288.5 L572.0 286.4 L571.7 281.1 L571.4 281.0 L571.1 280.3 L570.8 278.0 L570.5 270.3 L570.2 272.7 L569.8 270.9 L569.5 266.9 L569.2 264.7 L568.9 262.2 L568.6 261.2 L568.3 258.7 L568.0 257.2 L567.7 256.5 L567.4 255.6 L567.1 254.7 L566.8 253.5 L566.4 252.1 L566.1 251.6 L565.8 250.9 L565.5 250.2 L565.2 250.3 L564.9 250.6 L564.6 251.1 L564.3 251.4 L564.0 252.5 L563.7 253.3 L563.4 254.6 L563.1 255.6 L562.7 255.9 L562.4 256.1 L562.1 258.3 L561.8 259.4 L561.5 260.0 L561.2 264.1 L560.9 265.6 L560.6 266.1 L560.3 267.3 L560.0 267.9 L559.7 272.6 L559.3 264.4 L559.0 274.6 L558.7 277.1 L558.4 277.6 L558.1 279.1 L557.8 279.2 L557.5 282.7 L557.2 287.1 L556.9 291.0 L556.6 247.9 L556.3 284.5 L556.0 277.0 L555.6 277.7 L555.3 274.6 L555.0 269.9 L554.7 267.2 L554.4 267.6 L554.1 257.1 L553.8 260.2 L553.5 257.3 L553.2 257.0 L552.9 254.5 L552.6 253.0 L552.2 250.7 L551.9 247.1 L551.6 246.9 L551.3 243.8 L551.0 242.3 L550.7 240.3 L550.4 237.2 L550.1 235.6 L549.8 234.9 L549.5 233.1 L549.2 232.0 L548.8 229.1 L548.5 229.2 L548.2 228.1 L547.9 227.7 L547.6 227.4 L547.3 227.1 L547.0 226.9 L546.7 226.6 L546.4 226.5 L546.1 226.2 L545.8 226.0 L545.5 225.8 L545.1 225.6 L544.8 225.6 L544.5 226.2 L544.2 226.5 L543.9 227.8 L543.6 228.7 L543.3 229.6 L543.0 230.5 L542.7 232.5 L542.4 233.6 L542.1 233.7 L541.7 234.6 L541.4 236.5 L541.1 239.6 L540.8 240.9 L540.5 240.9 L540.2 242.1 L539.9 247.1 L539.6 245.0 L539.3 250.1 L539.0 251.0 L538.7 254.2 L538.3 255.8 L538.0 256.8 L537.7 259.4 L537.4 257.0 L537.1 259.2 L536.8 264.7 L536.5 266.7 L536.2 271.6 L535.9 261.8 L535.6 260.8 L535.3 262.8 L535.0 258.1 L534.6 252.5 L534.3 253.1 L534.0 250.8 L533.7 252.1 L533.4 247.9 L533.1 235.9 L532.8 242.7 L532.5 243.0 L532.2 238.6 L531.9 238.5 L531.6 236.4 L531.2 234.1 L530.9 232.0 L530.6 230.6 L530.3 228.2 L530.0 226.4 L529.7 225.1 L529.4 223.7 L529.1 222.2 L528.8 220.5 L528.5 219.7 L528.2 218.3 L527.8 217.3 L527.5 216.5 L527.2 216.1 L526.9 216.0 L526.6 215.9 L526.3 215.7 L526.0 215.6 L525.7 215.4 L525.4 215.3 L525.1 215.2 L524.8 215.0 L524.5 214.9 L524.1 215.0 L523.8 215.6 L523.5 216.5 L523.2 217.2 L522.9 218.1 L522.6 219.8 L522.3 220.2 L522.0 222.6 L521.7 222.7 L521.4 223.7 L521.1 227.4 L520.7 227.8 L520.4 229.8 L520.1 231.6 L519.8 234.5 L519.5 235.8 L519.2 237.4 L518.9 238.5 L518.6 241.7 L518.3 243.7 L518.0 242.5 L517.7 246.9 L517.4 249.5 L517.0 248.5 L516.7 246.4 L516.4 256.8 L516.1 257.6 L515.8 257.9 L515.5 264.0 L515.2 258.7 L514.9 256.2 L514.6 251.0 L514.3 246.4 L514.0 247.3 L513.6 240.5 L513.3 244.9 L513.0 243.5 L512.7 241.8 L512.4 238.9 L512.1 234.1 L511.8 234.1 L511.5 234.1 L511.2 232.5 L510.9 227.1 L510.6 228.2 L510.2 226.0 L509.9 224.4 L509.6 221.8 L509.3 221.5 L509.0 219.7 L508.7 217.8 L508.4 216.1 L508.1 215.4 L507.8 214.3 L507.5 213.3 L507.2 212.2 L506.9 211.5 L506.5 211.2 L506.2 211.3 L505.9 211.4 L505.6 211.2 L505.3 211.3 L505.0 211.3 L504.7 211.3 L504.4 211.3 L504.1 211.3 L503.8 211.4 L503.5 211.6 L503.1 212.6 L502.8 213.7 L502.5 214.7 L502.2 216.2 L501.9 217.7 L501.6 218.9 L501.3 219.1 L501.0 220.8 L500.7 223.5 L500.4 225.4 L500.1 225.1 L499.7 228.3 L499.4 230.2 L499.1 232.4 L498.8 234.8 L498.5 237.1 L498.2 234.3 L497.9 241.4 L497.6 241.7 L497.3 246.0 L497.0 220.2 L496.7 248.0 L496.4 243.0 L496.0 253.8 L495.7 255.4 L495.4 259.5 L495.1 255.0 L494.8 265.2 L494.5 258.2 L494.2 258.8 L493.9 257.9 L493.6 252.9 L493.3 249.8 L493.0 248.0 L492.6 241.0 L492.3 246.3 L492.0 243.6 L491.7 238.6 L491.4 235.8 L491.1 238.5 L490.8 236.3 L490.5 230.2 L490.2 232.3 L489.9 229.8 L489.6 226.1 L489.2 226.7 L488.9 225.6 L488.6 222.9 L488.3 223.1 L488.0 220.3 L487.7 219.6 L487.4 219.1 L487.1 217.6 L486.8 217.1 L486.5 216.2 L486.2 215.6 L485.9 215.6 L485.5 215.8 L485.2 215.9 L484.9 216.0 L484.6 216.3 L484.3 216.4 L484.0 216.6 L483.7 216.3 L483.4 217.0 L483.1 216.9 L482.8 217.6 L482.5 218.7 L482.1 220.0 L481.8 221.5 L481.5 222.4 L481.2 224.1 L480.9 226.3 L480.6 226.5 L480.3 229.4 L480.0 232.3 L479.7 234.2 L479.4 236.2 L479.1 236.8 L478.8 240.4 L478.4 241.4 L478.1 244.6 L477.8 244.4 L477.5 245.9 L477.2 251.0 L476.9 249.8 L476.6 255.4 L476.3 259.7 L476.0 262.8 L475.7 264.3 L475.4 265.0 L475.0 264.9 L474.7 273.3 L474.4 268.1 L474.1 278.5 L473.8 272.2 L473.5 235.5 L473.2 270.6 L472.9 263.7 L472.6 262.2 L472.3 262.7 L472.0 260.0 L471.6 257.1 L471.3 254.8 L471.0 249.3 L470.7 233.7 L470.4 252.2 L470.1 230.8 L469.8 246.5 L469.5 242.3 L469.2 244.3 L468.9 242.9 L468.6 240.4 L468.3 232.5 L467.9 238.5 L467.6 236.1 L467.3 236.4 L467.0 235.2 L466.7 234.3 L466.4 231.0 L466.1 232.8 L465.8 232.3 L465.5 232.2 L465.2 232.5 L464.9 233.3 L464.5 233.7 L464.2 234.8 L463.9 235.4 L463.6 236.3 L463.3 237.3 L463.0 238.0 L462.7 239.3 L462.4 240.4 L462.1 241.5 L461.8 242.5 L461.5 243.6 L461.1 244.9 L460.8 246.1 L460.5 248.1 L460.2 251.3 L459.9 254.8 L459.6 257.7 L459.3 262.5 L459.0 260.4 L458.7 269.1 L458.4 271.2 L458.1 275.2 L457.8 276.6 L457.4 282.9 L457.1 282.1 L456.8 266.4 L456.5 270.6 L456.2 294.0 L455.9 293.8 L455.6 284.1 L455.3 284.8 L455.0 321.4 L454.7 322.6 L454.4 322.9 L454.0 323.3 L453.7 323.3 L453.4 323.0 L453.1 322.7 L452.8 322.4 L452.5 318.3 L452.2 313.9 L451.9 316.3 L451.6 308.1 L451.3 306.9 L451.0 304.7 L450.6 304.1 L450.3 302.8 L450.0 309.9 L449.7 284.8 L449.4 302.5 L449.1 281.4 L448.8 299.3 L448.5 278.7 L448.2 272.3 L447.9 288.4 L447.6 274.5 L447.3 278.6 L446.9 276.5 L446.6 270.5 L446.3 257.7 L446.0 256.5 L445.7 261.2 L445.4 257.8 L445.1 255.2 L444.8 250.3 L444.5 248.4 L444.2 240.6 L443.9 239.6 L443.5 238.5 L443.2 237.7 L442.9 236.5 L442.6 235.9 L442.3 235.0 L442.0 233.7 L441.7 233.5 L441.4 233.1 L441.1 233.2 L440.8 233.2 L440.5 233.6 L440.2 234.4 L439.8 234.7 L439.5 235.8 L439.2 234.7 L438.9 237.4 L438.6 238.2 L438.3 230.7 L438.0 238.7 L437.7 239.2 L437.4 240.2 L437.1 242.1 L436.8 241.9 L436.4 242.9 L436.1 245.8 L435.8 248.8 L435.5 248.9 L435.2 251.3 L434.9 252.2 L434.6 252.5 L434.3 231.0 L434.0 254.8 L433.7 253.3 L433.4 261.3 L433.0 257.9 L432.7 265.6 L432.4 261.0 L432.1 259.1 L431.8 254.3 L431.5 253.3 L431.2 251.4 L430.9 247.0 L430.6 242.9 L430.3 238.2 L430.0 239.6 L429.7 234.9 L429.3 232.3 L429.0 233.7 L428.7 230.8 L428.4 228.3 L428.1 227.0 L427.8 224.6 L427.5 221.6 L427.2 220.9 L426.9 219.0 L426.6 214.8 L426.3 214.9 L425.9 213.0 L425.6 211.2 L425.3 210.0 L425.0 208.5 L424.7 207.2 L424.4 206.1 L424.1 205.1 L423.8 204.8 L423.5 204.5 L423.2 203.8 L422.9 204.0 L422.5 203.8 L422.2 203.6 L421.9 203.3 L421.6 203.0 L421.3 202.3 L421.0 202.5 L420.7 202.9 L420.4 203.4 L420.1 204.3 L419.8 205.2 L419.5 206.2 L419.2 207.0 L418.8 208.2 L418.5 209.9 L418.2 210.6 L417.9 212.7 L417.6 213.9 L417.3 216.3 L417.0 214.7 L416.7 218.7 L416.4 220.0 L416.1 222.7 L415.8 223.3 L415.4 226.7 L415.1 228.8 L414.8 226.2 L414.5 229.9 L414.2 230.2 L413.9 236.8 L413.6 238.4 L413.3 239.0 L413.0 241.6 L412.7 240.2 L412.4 205.4 L412.0 248.8 L411.7 238.8 L411.4 242.6 L411.1 237.6 L410.8 230.1 L410.5 234.1 L410.2 229.3 L409.9 230.2 L409.6 226.3 L409.3 221.7 L409.0 221.3 L408.7 218.8 L408.3 218.0 L408.0 216.2 L407.7 212.5 L407.4 210.3 L407.1 208.1 L406.8 207.0 L406.5 204.9 L406.2 202.9 L405.9 201.5 L405.6 199.6 L405.3 198.7 L404.9 197.2 L404.6 195.9 L404.3 194.5 L404.0 193.1 L403.7 192.3 L403.4 191.5 L403.1 191.2 L402.8 191.0 L402.5 190.9 L402.2 190.6 L401.9 190.6 L401.6 190.5 L401.2 190.2 L400.9 190.1 L400.6 190.0 L400.3 189.8 L400.0 190.2 L399.7 190.8 L399.4 191.9 L399.1 192.3 L398.8 194.2 L398.5 195.3 L398.2 196.7 L397.8 197.7 L397.5 199.8 L397.2 201.6 L396.9 202.4 L396.6 203.2 L396.3 205.1 L396.0 204.1 L395.7 206.7 L395.4 207.4 L395.1 211.7 L394.8 215.8 L394.4 215.3 L394.1 215.2 L393.8 221.3 L393.5 222.7 L393.2 224.4 L392.9 228.4 L392.6 226.7 L392.3 232.0 L392.0 230.6 L391.7 236.1 L391.4 239.3 L391.1 233.3 L390.7 225.6 L390.4 197.6 L390.1 224.1 L389.8 219.5 L389.5 222.9 L389.2 220.6 L388.9 216.5 L388.6 213.3 L388.3 210.8 L388.0 205.1 L387.7 208.8 L387.3 205.7 L387.0 201.4 L386.7 202.3 L386.4 198.6 L386.1 198.5 L385.8 195.3 L385.5 194.0 L385.2 193.2 L384.9 191.1 L384.6 189.5 L384.3 187.9 L383.9 186.7 L383.6 185.7 L383.3 184.4 L383.0 183.4 L382.7 182.6 L382.4 182.6 L382.1 182.3 L381.8 182.3 L381.5 182.2 L381.2 182.1 L380.9 182.1 L380.6 182.0 L380.2 181.9 L379.9 181.8 L379.6 181.7 L379.3 182.2 L379.0 182.9 L378.7 183.6 L378.4 184.4 L378.1 185.9 L377.8 187.5 L377.5 188.6 L377.2 190.5 L376.8 190.8 L376.5 194.0 L376.2 195.2 L375.9 195.8 L375.6 198.1 L375.3 200.4 L375.0 202.1 L374.7 204.0 L374.4 203.9 L374.1 207.0 L373.8 211.0 L373.4 207.1 L373.1 209.5 L372.8 216.3 L372.5 219.8 L372.2 221.5 L371.9 223.3 L371.6 222.6 L371.3 221.7 L371.0 232.3 L370.7 229.4 L370.4 219.6 L370.1 222.9 L369.7 221.7 L369.4 215.4 L369.1 218.1 L368.8 209.7 L368.5 208.9 L368.2 211.3 L367.9 206.5 L367.6 206.1 L367.3 202.6 L367.0 200.8 L366.7 199.5 L366.3 197.0 L366.0 196.5 L365.7 193.4 L365.4 191.0 L365.1 188.9 L364.8 188.9 L364.5 186.7 L364.2 185.5 L363.9 183.5 L363.6 182.2 L363.3 181.0 L363.0 179.8 L362.6 178.7 L362.3 177.7 L362.0 177.0 L361.7 177.1 L361.4 177.0 L361.1 176.9 L360.8 176.9 L360.5 176.7 L360.2 176.7 L359.9 176.6 L359.6 176.6 L359.2 176.5 L358.9 176.3 L358.6 177.1 L358.3 178.0 L358.0 179.0 L357.7 179.9 L357.4 181.7 L357.1 182.8 L356.8 184.1 L356.5 184.2 L356.2 186.6 L355.8 187.5 L355.5 189.8 L355.2 192.9 L354.9 193.9 L354.6 194.1 L354.3 197.4 L354.0 200.4 L353.7 197.6 L353.4 201.3 L353.1 204.4 L352.8 207.9 L352.5 209.3 L352.1 210.4 L351.8 215.4 L351.5 215.2 L351.2 219.8 L350.9 217.2 L350.6 214.1 L350.3 229.3 L350.0 217.2 L349.7 222.0 L349.4 221.2 L349.1 216.2 L348.7 217.4 L348.4 213.7 L348.1 212.4 L347.8 207.1 L347.5 207.9 L347.2 204.1 L346.9 201.8 L346.6 198.9 L346.3 194.8 L346.0 196.9 L345.7 192.7 L345.3 192.6 L345.0 190.7 L344.7 188.0 L344.4 184.2 L344.1 185.0 L343.8 183.5 L343.5 181.7 L343.2 180.1 L342.9 178.3 L342.6 177.2 L342.3 176.1 L342.0 174.9 L341.6 173.9 L341.3 173.4 L341.0 173.3 L340.7 173.3 L340.4 173.2 L340.1 173.1 L339.8 173.0 L339.5 172.9 L339.2 172.8 L338.9 172.7 L338.6 172.5 L338.2 172.3 L337.9 172.9 L337.6 173.8 L337.3 174.7 L337.0 175.9 L336.7 176.5 L336.4 177.6 L336.1 180.1 L335.8 181.8 L335.5 183.1 L335.2 184.2 L334.8 187.3 L334.5 186.7 L334.2 191.4 L333.9 192.9 L333.6 194.4 L333.3 197.5 L333.0 199.5 L332.7 202.7 L332.4 200.2 L332.1 207.0 L331.8 206.2 L331.5 210.7 L331.1 209.8 L330.8 213.4 L330.5 215.4 L330.2 219.4 L329.9 225.0 L329.6 229.3 L329.3 226.9 L329.0 219.8 L328.7 217.5 L328.4 220.0 L328.1 211.5 L327.7 211.0 L327.4 210.8 L327.1 205.6 L326.8 205.4 L326.5 205.4 L326.2 200.4 L325.9 200.1 L325.6 196.1 L325.3 191.6 L325.0 194.4 L324.7 191.4 L324.4 190.2 L324.0 188.1 L323.7 186.9 L323.4 185.0 L323.1 182.8 L322.8 181.5 L322.5 180.1 L322.2 178.6 L321.9 177.1 L321.6 176.3 L321.3 175.1 L321.0 174.2 L320.6 173.8 L320.3 173.9 L320.0 173.9 L319.7 173.9 L319.4 174.0 L319.1 174.0 L318.8 174.0 L318.5 174.0 L318.2 174.0 L317.9 174.0 L317.6 174.2 L317.2 174.9 L316.9 175.9 L316.6 176.4 L316.3 178.3 L316.0 179.4 L315.7 180.3 L315.4 182.8 L315.1 184.1 L314.8 185.7 L314.5 187.4 L314.2 189.4 L313.9 189.9 L313.5 193.5 L313.2 193.8 L312.9 195.9 L312.6 199.5 L312.3 200.6 L312.0 197.3 L311.7 205.8 L311.4 201.1 L311.1 206.6 L310.8 210.1 L310.5 214.0 L310.1 217.1 L309.8 210.3 L309.5 213.7 L309.2 220.4 L308.9 227.5 L308.6 221.3 L308.3 216.6 L308.0 216.0 L307.7 218.1 L307.4 213.2 L307.1 213.6 L306.7 210.5 L306.4 205.5 L306.1 203.1 L305.8 203.8 L305.5 201.3 L305.2 199.6 L304.9 197.6 L304.6 196.9 L304.3 193.7 L304.0 193.4 L303.7 189.4 L303.4 189.2 L303.0 187.3 L302.7 186.8 L302.4 185.2 L302.1 183.9 L301.8 182.7 L301.5 181.1 L301.2 179.9 L300.9 179.1 L300.6 178.1 L300.3 177.4 L300.0 177.1 L299.6 177.0 L299.3 177.2 L299.0 177.3 L298.7 177.3 L298.4 177.5 L298.1 177.5 L297.8 177.6 L297.5 177.7 L297.2 177.7 L296.9 177.8 L296.6 178.7 L296.2 179.5 L295.9 181.0 L295.6 182.1 L295.3 183.6 L295.0 185.1 L294.7 186.0 L294.4 188.7 L294.1 188.3 L293.8 191.7 L293.5 192.8 L293.2 195.9 L292.9 195.0 L292.5 199.2 L292.2 201.6 L291.9 203.7 L291.6 205.8 L291.3 207.7 L291.0 207.1 L290.7 210.8 L290.4 210.6 L290.1 214.4 L289.8 220.0 L289.5 221.4 L289.1 222.7 L288.8 227.4 L288.5 226.5 L288.2 233.3 L287.9 229.3 L287.6 229.2 L287.3 225.0 L287.0 218.6 L286.7 220.1 L286.4 215.0 L286.1 213.4 L285.8 214.7 L285.4 212.7 L285.1 207.8 L284.8 205.2 L284.5 202.7 L284.2 202.6 L283.9 199.2 L283.6 199.2 L283.3 197.7 L283.0 196.3 L282.7 194.9 L282.4 193.9 L282.0 191.8 L281.7 190.8 L281.4 188.8 L281.1 187.2 L280.8 185.6 L280.5 185.0 L280.2 184.2 L279.9 183.1 L279.6 182.5 L279.3 182.2 L279.0 182.3 L278.6 182.4 L278.3 182.4 L278.0 182.7 L277.7 182.7 L277.4 182.8 L277.1 183.0 L276.8 183.1 L276.5 183.1 L276.2 183.4 L275.9 184.3 L275.6 185.2 L275.3 186.4 L274.9 187.5 L274.6 189.4 L274.3 190.6 L274.0 192.5 L273.7 192.5 L273.4 195.7 L273.1 196.7 L272.8 197.2 L272.5 200.9 L272.2 202.7 L271.9 203.4 L271.5 204.1 L271.2 208.5 L270.9 210.3 L270.6 214.0 L270.3 216.0 L270.0 218.3 L269.7 215.6 L269.4 215.7 L269.1 224.4 L268.8 214.6 L268.5 228.5 L268.1 225.2 L267.8 229.1 L267.5 238.0 L267.2 233.5 L266.9 229.2 L266.6 226.6 L266.3 228.2 L266.0 226.2 L265.7 222.9 L265.4 221.3 L265.1 215.9 L264.8 217.9 L264.4 216.0 L264.1 213.7 L263.8 212.3 L263.5 210.9 L263.2 208.8 L262.9 207.2 L262.6 206.3 L262.3 204.6 L262.0 202.2 L261.7 201.9 L261.4 199.8 L261.0 196.7 L260.7 197.6 L260.4 195.7 L260.1 195.0 L259.8 194.1 L259.5 193.1 L259.2 192.3 L258.9 191.6 L258.6 191.6 L258.3 191.7 L258.0 191.9 L257.6 192.0 L257.3 192.2 L257.0 192.4 L256.7 192.5 L256.4 192.7 L256.1 193.0 L255.8 193.2 L255.5 193.5 L255.2 194.4 L254.9 195.0 L254.6 196.5 L254.3 198.0 L253.9 199.0 L253.6 200.8 L253.3 202.3 L253.0 203.8 L252.7 204.2 L252.4 205.4 L252.1 208.3 L251.8 210.4 L251.5 210.8 L251.2 211.1 L250.9 216.1 L250.5 219.6 L250.2 219.2 L249.9 221.7 L249.6 224.4 L249.3 224.8 L249.0 229.0 L248.7 231.7 L248.4 226.5 L248.1 235.5 L247.8 239.5 L247.5 238.7 L247.2 239.2 L246.8 247.0 L246.5 238.0 L246.2 239.7 L245.9 237.1 L245.6 235.1 L245.3 232.3 L245.0 233.9 L244.7 230.3 L244.4 229.0 L244.1 223.8 L243.8 228.4 L243.4 226.8 L243.1 222.8 L242.8 223.1 L242.5 221.4 L242.2 216.3 L241.9 216.7 L241.6 215.3 L241.3 215.3 L241.0 214.0 L240.7 212.6 L240.4 211.6 L240.0 210.6 L239.7 209.0 L239.4 208.6 L239.1 208.0 L238.8 207.0 L238.5 206.5 L238.2 206.0 L237.9 206.0 L237.6 206.3 L237.3 206.6 L237.0 207.0 L236.7 207.2 L236.3 207.5 L236.0 207.8 L235.7 208.1 L235.4 208.3 L235.1 208.7 L234.8 209.1 L234.5 210.2 L234.2 211.3 L233.9 212.4 L233.6 214.3 L233.3 215.5 L232.9 217.6 L232.6 219.4 L232.3 220.9 L232.0 220.6 L231.7 218.6 L231.4 227.5 L231.1 225.6 L230.8 225.5 L230.5 232.6 L230.2 236.0 L229.9 237.7 L229.5 240.8 L229.2 241.8 L228.9 223.5 L228.6 241.8 L228.3 248.0 L228.0 252.0 L227.7 250.2 L227.4 257.5 L227.1 255.2 L226.8 263.2 L226.5 259.6 L226.2 269.8 L225.8 259.7 L225.5 254.7 L225.2 260.1 L224.9 261.9 L224.6 251.9 L224.3 255.1 L224.0 251.4 L223.7 228.6 L223.4 251.1 L223.1 247.3 L222.8 248.0 L222.4 246.8 L222.1 243.4 L221.8 228.6 L221.5 243.5 L221.2 241.8 L220.9 239.7 L220.6 236.0 L220.3 237.8 L220.0 230.9 L219.7 235.6 L219.4 234.7 L219.0 234.1 L218.7 233.6 L218.4 233.2 L218.1 232.8 L217.8 232.6 L217.5 232.2 L217.2 233.2 L216.9 233.9 L216.6 234.5 L216.3 235.7 L216.0 236.5 L215.7 237.3 L215.3 237.7 L215.0 239.0 L214.7 239.8 L214.4 240.7 L214.1 241.2 L213.8 242.4 L213.5 243.4 L213.2 244.3 L212.9 245.2 L212.6 247.6 L212.3 248.9 L211.9 255.0 L211.6 251.9 L211.3 255.5 L211.0 264.0 L210.7 267.1 L210.4 277.1 L210.1 284.3 L209.8 292.7 L209.5 297.5 L209.2 309.8 L208.9 306.5 L208.6 319.7 L208.2 294.4 L207.9 300.3 L207.6 302.6 L207.3 286.7 L207.0 327.3 L206.7 327.7 L206.4 328.0 L206.1 328.3 L205.8 327.9 L205.5 327.6 L205.2 327.3 L204.8 307.7 L204.5 300.8 L204.2 316.7 L203.9 313.6 L203.6 295.3 L203.3 294.9 L203.0 310.4 L202.7 308.6 L202.4 310.5 L202.1 309.5 L201.8 302.8 L201.4 289.3 L201.1 300.8 L200.8 286.8 L200.5 270.3 L200.2 284.9 L199.9 277.8 L199.6 268.9 L199.3 279.6 L199.0 260.5 L198.7 271.1 L198.4 264.3 L198.1 265.8 L197.7 254.8 L197.4 260.3 L197.1 256.6 L196.8 253.0 L196.5 251.7 L196.2 249.6 L195.9 246.1 L195.6 238.6 L195.3 237.8 L195.0 237.0 L194.7 236.4 L194.3 235.8 L194.0 234.9 L193.7 234.6 L193.4 234.5 L193.1 234.9 L192.8 235.5 L192.5 236.1 L192.2 237.4 L191.9 238.6 L191.6 239.2 L191.3 240.5 L190.9 242.1 L190.6 243.7 L190.3 245.4 L190.0 246.9 L189.7 244.9 L189.4 248.5 L189.1 252.1 L188.8 252.9 L188.5 256.1 L188.2 250.7 L187.9 260.2 L187.6 262.3 L187.2 250.8 L186.9 234.0 L186.6 266.2 L186.3 268.7 L186.0 268.6 L185.7 267.9 L185.4 273.3 L185.1 253.4 L184.8 282.8 L184.5 239.0 L184.2 275.0 L183.8 268.9 L183.5 269.2 L183.2 268.2 L182.9 260.6 L182.6 262.3 L182.3 258.4 L182.0 257.4 L181.7 248.6 L181.4 251.5 L181.1 245.7 L180.8 245.6 L180.4 242.9 L180.1 242.0 L179.8 239.1 L179.5 237.3 L179.2 233.0 L178.9 231.2 L178.6 231.6 L178.3 230.0 L178.0 226.5 L177.7 226.2 L177.4 224.6 L177.1 222.6 L176.7 221.6 L176.4 220.5 L176.1 219.5 L175.8 219.2 L175.5 219.0 L175.2 218.9 L174.9 218.7 L174.6 218.6 L174.3 218.5 L174.0 218.3 L173.7 218.2 L173.3 218.1 L173.0 218.0 L172.7 218.2 L172.4 218.8 L172.1 219.5 L171.8 220.3 L171.5 222.0 L171.2 223.1 L170.9 224.7 L170.6 226.2 L170.3 227.6 L170.0 228.5 L169.6 229.6 L169.3 232.0 L169.0 233.7 L168.7 236.3 L168.4 234.9 L168.1 237.4 L167.8 242.8 L167.5 243.6 L167.2 244.5 L166.9 248.0 L166.6 251.5 L166.2 236.0 L165.9 249.0 L165.6 256.3 L165.3 255.9 L165.0 261.3 L164.7 262.9 L164.4 267.5 L164.1 269.8 L163.8 260.4 L163.5 263.8 L163.2 260.7 L162.8 256.0 L162.5 255.8 L162.2 253.0 L161.9 251.2 L161.6 248.4 L161.3 247.4 L161.0 245.2 L160.7 243.3 L160.4 237.6 L160.1 238.1 L159.8 233.1 L159.5 233.0 L159.1 229.1 L158.8 228.7 L158.5 227.0 L158.2 226.7 L157.9 225.1 L157.6 223.8 L157.3 221.4 L157.0 220.6 L156.7 218.6 L156.4 217.3 L156.1 216.7 L155.7 215.6 L155.4 214.8 L155.1 214.7 L154.8 214.7 L154.5 214.6 L154.2 214.7 L153.9 214.7 L153.6 214.7 L153.3 214.7 L153.0 214.7 L152.7 214.6 L152.3 214.6 L152.0 215.1 L151.7 216.1 L151.4 217.0 L151.1 218.1 L150.8 219.1 L150.5 220.9 L150.2 222.4 L149.9 224.4 L149.6 225.9 L149.3 225.6 L149.0 229.5 L148.6 231.3 L148.3 233.9 L148.0 235.2 L147.7 235.8 L147.4 239.7 L147.1 240.5 L146.8 243.5 L146.5 241.1 L146.2 247.3 L145.9 251.0 L145.6 248.8 L145.2 249.5 L144.9 251.4 L144.6 256.5 L144.3 254.1 L144.0 260.1 L143.7 260.8 L143.4 270.5 L143.1 257.1 L142.8 260.5 L142.5 262.3 L142.2 259.4 L141.8 256.9 L141.5 253.1 L141.2 249.8 L140.9 247.3 L140.6 248.7 L140.3 243.2 L140.0 244.0 L139.7 240.9 L139.4 238.6 L139.1 236.8 L138.8 234.3 L138.5 234.2 L138.1 232.2 L137.8 230.7 L137.5 228.6 L137.2 226.1 L136.9 225.7 L136.6 224.1 L136.3 222.7 L136.0 220.7 L135.7 219.9 L135.4 219.2 L135.1 218.4 L134.7 217.7 L134.4 217.8 L134.1 217.9 L133.8 217.9 L133.5 218.1 L133.2 218.2 L132.9 218.2 L132.6 218.3 L132.3 218.5 L132.0 218.6 L131.7 218.7 L131.4 219.2 L131.0 220.3 L130.7 221.4 L130.4 222.9 L130.1 224.0 L129.8 221.4 L129.5 227.4 L129.2 229.3 L128.9 230.1 L128.6 232.1 L128.3 235.0 L128.0 235.3 L127.6 235.1 L127.3 240.1 L127.0 243.3 L126.7 243.1 L126.4 247.7 L126.1 250.2 L125.8 247.3 L125.5 249.1 L125.2 255.5 L124.9 258.9 L124.6 258.1 L124.2 261.8 L123.9 266.6 L123.6 265.0 L123.3 268.5 L123.0 270.0 L122.7 276.9 L122.4 273.2 L122.1 271.7 L121.8 264.9 L121.5 266.5 L121.2 264.6 L120.9 262.8 L120.5 260.2 L120.2 257.0 L119.9 253.3 L119.6 253.5 L119.3 252.0 L119.0 250.4 L118.7 248.6 L118.4 246.8 L118.1 241.6 L117.8 240.3 L117.5 240.7 L117.1 239.3 L116.8 237.5 L116.5 236.6 L116.2 234.6 L115.9 233.4 L115.6 231.9 L115.3 231.4 L115.0 230.2 L114.7 229.5 L114.4 228.7 L114.1 228.2 L113.7 228.4 L113.4 228.5 L113.1 228.8 L112.8 229.0 L112.5 229.2 L112.2 229.4 L111.9 229.7 L111.6 229.9 L111.3 230.1 L111.0 230.4 L110.7 230.7 L110.4 232.1 L110.0 233.4 L109.7 234.9 L109.4 236.2 L109.1 237.5 L108.8 239.8 L108.5 241.2 L108.2 244.1 L107.9 244.4 L107.6 247.4 L107.3 249.3 L107.0 250.1 L106.6 251.7 L106.3 257.3 L106.0 258.2 L105.7 260.5 L105.4 259.9 L105.1 266.1 L104.8 264.9 L104.5 267.9 L104.2 264.0 L103.9 276.0 L103.6 274.2 L103.2 260.9 L102.9 285.8 L102.6 288.7 L102.3 290.5 L102.0 293.5 L101.7 285.9 L101.4 284.7 L101.1 282.7 L100.8 282.4 L100.5 280.3 L100.2 274.3 L99.9 277.2 L99.5 272.3 L99.2 273.1 L98.9 269.6 L98.6 267.8 L98.3 267.6 L98.0 264.2 L97.7 264.0 L97.4 257.1 L97.1 262.7 L96.8 260.5 L96.5 260.0 L96.1 256.7 L95.8 257.5 L95.5 254.3 L95.2 255.0 L94.9 253.8 L94.6 253.6 L94.3 252.6 L94.0 251.7 L93.7 251.8 L93.4 251.6 L93.1 252.6 L92.8 253.4 L92.4 254.1 L92.1 255.0 L91.8 255.9 L91.5 256.7 L91.2 257.6 L90.9 259.1 L90.6 262.3 L90.3 263.4 L90.0 267.8 L89.7 267.4 L89.4 273.0 L89.0 274.2 L88.7 280.3 L88.4 284.0 L88.1 289.6 L87.8 290.6 L87.5 296.4 L87.2 302.4 L86.9 303.7 L86.6 287.3 L86.3 308.3 L86.0 318.1 L85.6 296.9 L85.3 320.4 L85.0 327.3 L84.7 331.1 L84.4 328.2 L84.1 343.4 L83.8 352.0 L83.5 352.5 L83.2 352.9 L82.9 353.4 L82.6 353.1 L82.3 352.7 L81.9 352.2 L81.6 348.5 L81.3 337.1 L81.0 315.5 L80.7 320.4 L80.4 322.6 L80.1 323.6 L79.8 286.2 L79.5 288.6 L79.2 310.2 L78.9 298.0 L78.5 309.0 L78.2 306.9 L77.9 301.0 L77.6 298.6 L77.3 298.8 L77.0 294.2 L76.7 281.1 L76.4 286.3 L76.1 284.6 L75.8 283.3 L75.5 271.9 L75.1 276.9 L74.8 272.6 L74.5 268.3 L74.2 265.1 L73.9 263.0 L73.6 261.2 L73.3 260.5 L73.0 259.7 L72.7 258.7 L72.4 257.6 L72.1 256.3 L71.8 255.5 L71.4 254.3 L71.1 253.3 L70.8 252.3 L70.5 251.4 L70.2 250.6 L69.9 249.7 L69.6 249.2 L69.3 249.0 L69.0 249.6 L68.7 250.1 L68.4 251.3 L68.0 252.2 L67.7 253.5 L67.4 250.5 L67.1 249.5 L66.8 257.3 L66.5 259.1 L66.2 260.2 L65.9 260.6 L65.6 262.1 L65.3 265.7 L65.0 266.9 L64.6 269.3 L64.3 268.8 L64.0 260.0 L63.7 274.7 L63.4 256.3 L63.1 279.2 L62.8 278.8 L62.5 273.5 L62.2 284.7 L61.9 282.4 L61.6 285.4 L61.3 291.7 L60.9 296.7 L60.6 294.3 L60.3 288.6 L60.0 286.1 L59.7 283.5 L59.4 278.3 L59.1 278.9 L58.8 277.9 L58.5 267.9 L58.2 271.0 L57.9 269.9 L57.5 246.5 L57.2 246.7 L56.9 245.2 L56.6 260.9 L56.3 257.2 L56.0 253.8 L55.7 250.2 L55.4 249.9 L55.1 246.0 L54.8 246.6 L54.5 244.9 L54.2 243.6 L53.8 237.8 L53.5 240.0 L53.2 238.4 L52.9 237.4 L52.6 236.0 L52.3 234.9 L52.0 234.1 L51.7 233.8 L51.4 233.8 L51.1 233.7 L50.8 233.4 L50.4 233.3 L50.1 233.2 L49.8 233.2 L49.5 233.1 L49.2 232.7 L48.9 232.8 L48.6 233.3 L48.3 234.0 L48.0 234.4 L47.7 236.3 L47.4 236.5 L47.0 238.9 L46.7 239.5 L46.4 241.4 L46.1 243.1 L45.8 243.8 L45.5 246.2 L45.2 247.4 L44.9 249.6 L44.6 250.8 L44.3 251.7 L44.0 253.9 L43.7 254.3 L43.3 259.4 L43.0 261.6 L42.7 250.5 L42.4 262.1 L42.1 266.0 L41.8 268.7 L41.5 272.6 L41.2 272.8 L40.9 267.7 L40.6 278.0 L40.3 283.0 L39.9 244.7 L39.6 274.1 L39.3 274.8 L39.0 274.1 L38.7 262.5 L38.4 261.5 L38.1 267.0 L37.8 262.9 L37.5 262.0 L37.2 259.6 L36.9 258.1 L36.5 254.7 L36.2 252.1 L35.9 249.3 L35.6 247.0 L35.3 247.6 L35.0 243.3 L34.7 242.3 L34.4 242.0 L34.1 240.3 L33.8 238.1 L33.5 236.6 L33.2 235.5 L32.8 233.9 L32.5 232.4 L32.2 231.4 L31.9 230.2 L31.6 229.3 L31.3 228.8 L31.0 228.7 L30.7 228.6 L30.4 228.6 L30.1 228.6 L29.8 228.6 L29.4 228.4 L29.1 228.5 L28.8 228.3 L28.5 228.4 L28.2 228.4 L27.9 229.1 L27.6 230.2 L27.3 231.3 L27.0 232.1 L26.7 233.7 L26.4 234.5 L26.0 236.1 L25.7 238.1 L25.4 240.8 L25.1 241.4 L24.8 244.7 L24.5 245.5 L24.2 247.3 L23.9 250.6 L23.6 251.5 L23.3 252.1 L23.0 255.1 L22.7 256.6 L22.3 258.3 L22.0 262.8 L21.7 264.5 L21.4 268.2 L21.1 264.4 L20.8 269.5Z"/>
<path d="M324 176V236.5M325.6 174V222" stroke="#c8c800" stroke-width="0.55" fill="none"/>
<rect x="21" y="322" width="10.8" height="4" fill="#000"/><rect x="19.4" y="323.9" width="12.4" height="14.4" fill="#000"/>
<text x="22.3" y="335.2" font-size="12.2" fill="#e6e600" style="font-family:'Liberation Sans',Arial,sans-serif">1</text>
<path d="M21.6 342.2H29.2M21.6 342.2L24.4 340.2M21.6 342.2L24.4 344.2" stroke="#00a000" stroke-width="0.8" fill="none"/>
</svg>

<div class="a" style="left:638.7px;top:54.3px;width:1.1px;height:348.3px;background:#2b90c8;"></div>
<!-- ===== bottom bar ===== -->

<div class="btn" style="left:1.6px;top:404.3px;width:18.2px;height:17.4px;"></div>
<div class="btn" style="left:23.5px;top:404.3px;width:17.8px;height:17.4px;"></div>
<div class="btn" style="left:45.3px;top:404.3px;width:17.8px;height:17.4px;"></div>
<div class="btn" style="left:67.2px;top:404.3px;width:17.8px;height:17.4px;"></div>
<div class="btn" style="left:89px;top:404.3px;width:17.9px;height:17.4px;"></div>
<svg class="a" style="left:0;top:402px;" width="110" height="22" viewBox="0 402 110 22">
<!-- windows logo -->
<path d="M5.05 409.4L10.45 408.5V413.1H5.05ZM11.15 408.4L17 406.8V413.1H11.15ZM5.05 413.9H10.45V418.4L5.05 417.5ZM11.15 413.9H17V419.9L11.15 418.5Z" fill="#ececec"/>
<!-- undo -->
<path d="M37.1 418.7C39.8 415.4 39.4 410.1 31 410.7" fill="none" stroke="#fff" stroke-width="2.2"/>
<path d="M25.9 411.8L29.2 407.3L31.9 413.8Z" fill="#fff"/>
<!-- redo -->
<path d="M49.75 418.7C47.05 415.4 47.45 410.1 55.85 410.7" fill="none" stroke="#8c8c8c" stroke-width="2.2"/>
<path d="M60.95 411.8L57.65 407.3L54.95 413.8Z" fill="#8c8c8c"/>
<!-- folder -->
<path d="M69 407.7H74.2L75.4 409H82.5V419H69Z" fill="#f2f2f2"/>
<!-- help -->
<text x="92.7" y="419.1" font-size="16.4" font-weight="bold" fill="#fff" style="font-family:'Liberation Sans',Arial,sans-serif">?</text>
</svg>
<div class="a" style="left:106px;top:406.1px;width:50px;text-align:center;font-size:6.85px;line-height:7.45px;color:#e0e0e0;">Aug 28, 2025<br>9:06:21 AM</div>
<div class="a" style="left:154.3px;top:404.6px;width:394.4px;height:16.8px;background:#161616;border:1px solid #3a3a3a;border-radius:2px;box-sizing:border-box;"></div>
<svg class="a" style="left:155px;top:404px;" width="36" height="18" viewBox="155 404 36 18">
<ellipse cx="163.3" cy="412" rx="6.9" ry="5.4" fill="#5a5a5a"/><path d="M158.4 415L157 418.6L162 416.6Z" fill="#5a5a5a"/>
<circle cx="161" cy="412.2" r="0.55" fill="#c8c8c8"/><circle cx="163.3" cy="412.2" r="0.55" fill="#c8c8c8"/><circle cx="165.6" cy="412.2" r="0.55" fill="#c8c8c8"/>
<path d="M178.9 406.8L185.8 419.6H172Z" fill="none" stroke="#2a2a2a" stroke-width="0.7"/>
</svg>
<div class="btn" style="left:553.4px;top:404.1px;width:17.5px;height:17.5px;background:#000;border-color:#4c4c4c;"></div>
<div class="btn" style="left:575px;top:404.1px;width:17.1px;height:17.5px;background:#000;border-color:#4c4c4c;"></div>
<div class="btn" style="left:597px;top:404.1px;width:17.3px;height:17.5px;background:#000;border-color:#4c4c4c;"></div>
<div class="btn" style="left:618.6px;top:404.1px;width:17.3px;height:17.5px;background:#000;border-color:#4c4c4c;"></div>
<svg class="a" style="left:550px;top:402px;" width="90" height="22" viewBox="550 402 90 22">
<g fill="#fff"><rect x="560.3" y="408.1" width="3.3" height="3.4"/><rect x="566" y="408.1" width="3.3" height="3.4"/><rect x="555" y="415" width="3.2" height="3.3"/><rect x="560.3" y="415" width="3.3" height="3.3"/><rect x="566" y="415" width="3.3" height="3.3"/></g>
<path d="M556 416.65H568M561.95 410V416.4M562 409.8H567" stroke="#b0b0b0" stroke-width="0.6" fill="none"/>
<g fill="none" stroke="#7a7a7a" stroke-width="0.75"><rect x="577" y="406.9" width="5.4" height="5.4"/><rect x="584.2" y="406.9" width="5.8" height="5.4"/><rect x="577" y="414.1" width="5.4" height="5.4"/><rect x="584.2" y="414.1" width="5.8" height="5.4"/>
<rect x="598.8" y="406.9" width="5.4" height="5.4"/><rect x="606" y="406.9" width="5.9" height="5.4"/><rect x="598.8" y="414.1" width="5.4" height="5.4"/><rect x="606" y="414.1" width="5.9" height="5.4"/></g>
<path d="M578.5 406.3L580.3 406.7L583.2 408.5L585.2 409.2L586.9 411.1L587.5 413.4L588.7 416.8L586 419.3L583.6 417.9L580.8 414.9L579.8 411.7L581 410.7Z" fill="#f2f2f2"/>
<g stroke="#f0f0f0" stroke-width="0.7" fill="#f0f0f0"><path d="M625.9 411.8L622 408M628.7 411.8L632.6 408M625.9 414.6L622 418.4M628.7 414.6L632.6 418.4"/>
<path d="M620.40 406.40L621.75 409.85L623.85 407.75ZM620.40 420.00L621.75 416.55L623.85 418.65ZM634.20 406.40L632.85 409.85L630.75 407.75ZM634.20 420.00L632.85 416.55L630.75 418.65Z" stroke="none"/></g>
</svg>

<!-- ===== right panel ===== -->
<div class="a" style="left:639.8px;top:22px;width:118.2px;height:402px;background:#154b67;"></div>
<div class="btn" style="left:642.1px;top:2.1px;width:18px;height:17.9px;background:#1e1e1e;border-color:#4a4a4a;"></div>
<svg class="a" style="left:643px;top:3px;" width="17" height="16" viewBox="643 3 17 16">
<g transform="translate(650.9 10.7) rotate(22.5)"><g fill="#fff"><circle r="5"/>
<rect x="-1.45" y="-6.6" width="2.9" height="13.2"/><rect x="-1.45" y="-6.6" width="2.9" height="13.2" transform="rotate(45)"/><rect x="-1.45" y="-6.6" width="2.9" height="13.2" transform="rotate(90)"/><rect x="-1.45" y="-6.6" width="2.9" height="13.2" transform="rotate(135)"/></g>
<circle r="2.9" fill="#1e1e1e"/></g></svg>
<div class="a" style="left:661.7px;top:0.6px;width:74.4px;height:22px;background:#154b67;border-radius:4px 4px 0 0;"></div>
<div class="t" style="left:690.9px;top:7.4px;color:#fff;">Trace</div>
<div class="tri" style="left:728.8px;top:9px;"></div>
<div class="btn" style="left:738.2px;top:2.1px;width:18.2px;height:17.9px;background:#1e1e1e;border-color:#4a4a4a;"></div>
<svg class="a" style="left:739px;top:3px;" width="17" height="16" viewBox="739 3 17 16"><g transform="translate(747 10.7)" stroke="#10d010" stroke-width="1.5" stroke-linecap="round"><path d="M0 -3.9V-6.1" transform="rotate(0)"/><path d="M0 -3.9V-6.1" transform="rotate(45)"/><path d="M0 -3.9V-6.1" transform="rotate(90)"/><path d="M0 -3.9V-6.1" transform="rotate(135)"/><path d="M0 -3.9V-6.1" transform="rotate(180)"/><path d="M0 -3.9V-6.1" transform="rotate(225)"/><path d="M0 -3.9V-6.1" transform="rotate(270)"/><path d="M0 -3.9V-6.1" transform="rotate(315)"/></g></svg>

<div class="a" style="left:642.2px;top:23.6px;width:113.8px;height:23.2px;background:#4d4d4d;border:0.6px solid #464646;border-radius:1.5px;box-sizing:border-box;"></div>
<div class="a" style="left:642.8px;top:44px;width:112.6px;height:1px;background:#434343;"></div>
<div class="t" style="left:642.9px;top:24.6px;color:#fff;">Select Trace</div>
<div class="t" style="left:644.8px;top:35.3px;color:#fff;">Trace 1</div>
<div class="tri" style="left:750.8px;top:37.2px;"></div>

<div class="a" style="left:641.7px;top:49.6px;width:75px;height:372.8px;background:#3fa9dc;border-radius:3px 0 0 0;"></div>
<div class="a" style="left:716px;top:51.2px;width:41.2px;height:17.4px;background:#3fa9dc;border-radius:0 3px 3px 0;"></div>
<div class="a" style="left:719.3px;top:52px;font-size:6.8px;line-height:7.8px;color:#0a2036;">Trace<br>Control</div>
<div class="sb" style="top:72.6px;padding-top:5.3px;">Detector</div>
<div class="sb" style="top:94.4px;padding-top:5.3px;">Math</div>
<div class="sb" style="top:116.2px;padding-top:0.8px;">Trace<br>Function</div>
<div class="sb" style="top:137.8px;padding-top:5.5px;">Normalize</div>

<div class="a" style="left:644.1px;top:51.2px;width:70.8px;height:88.7px;background:#4d4d4d;"></div>
<div class="t" style="left:645.3px;top:52.8px;color:#fff;">Trace Type</div>
<div class="rad" style="top:65.3px;"></div><div class="rl" style="top:67.1px;">Clear / Write</div>
<div class="rad" style="top:84.4px;"></div><div class="rl" style="top:85.5px;">Trace Average</div>
<div class="rad on" style="top:103.6px;"></div><div class="rl" style="top:105.1px;">Max Hold</div>
<div class="rad" style="top:122.8px;"></div><div class="rl" style="top:123.9px;">Min Hold</div>
<div class="a" style="left:646.6px;top:142.8px;width:66.2px;height:16.6px;background:#4d4d4d;border:0.8px solid #41606f;border-radius:3px;box-sizing:border-box;"></div>
<div class="t" style="left:646.6px;top:148.2px;width:66.2px;text-align:center;color:#fff;">Restart Max Hold</div>

<div class="a" style="left:644.1px;top:162.3px;width:70.8px;height:88.5px;background:#4d4d4d;"></div>
<div class="t" style="left:645px;top:164.2px;color:#fff;">View/Blank</div>
<div class="rad on" style="top:176.4px;"></div><div class="rl" style="top:177.5px;">Active</div>
<div class="rad" style="top:195.6px;"></div><div class="rl" style="top:196.7px;">View</div>
<div class="rad" style="top:214.8px;"></div><div class="rl" style="top:215.9px;">Blank</div>
<div class="rad" style="top:234px;"></div><div class="rl" style="top:235.1px;">Background</div>
<div class="a" style="left:646.6px;top:254px;width:66.2px;height:16.8px;background:#4d4d4d;border:0.8px solid #41606f;border-radius:3px;box-sizing:border-box;"></div>
<div class="a" style="left:648.6px;top:254.9px;width:62px;text-align:center;font-size:6.8px;line-height:7.8px;color:#fff;">Trace Settings<br>Table</div>
<svg class="a" style="left:646px;top:255px;" width="8" height="15" viewBox="646 255 8 15"><path d="M652.2 257.2L647.8 262.5L652.2 267.8" fill="none" stroke="#fff" stroke-width="0.9"/></svg>

</body></html>
